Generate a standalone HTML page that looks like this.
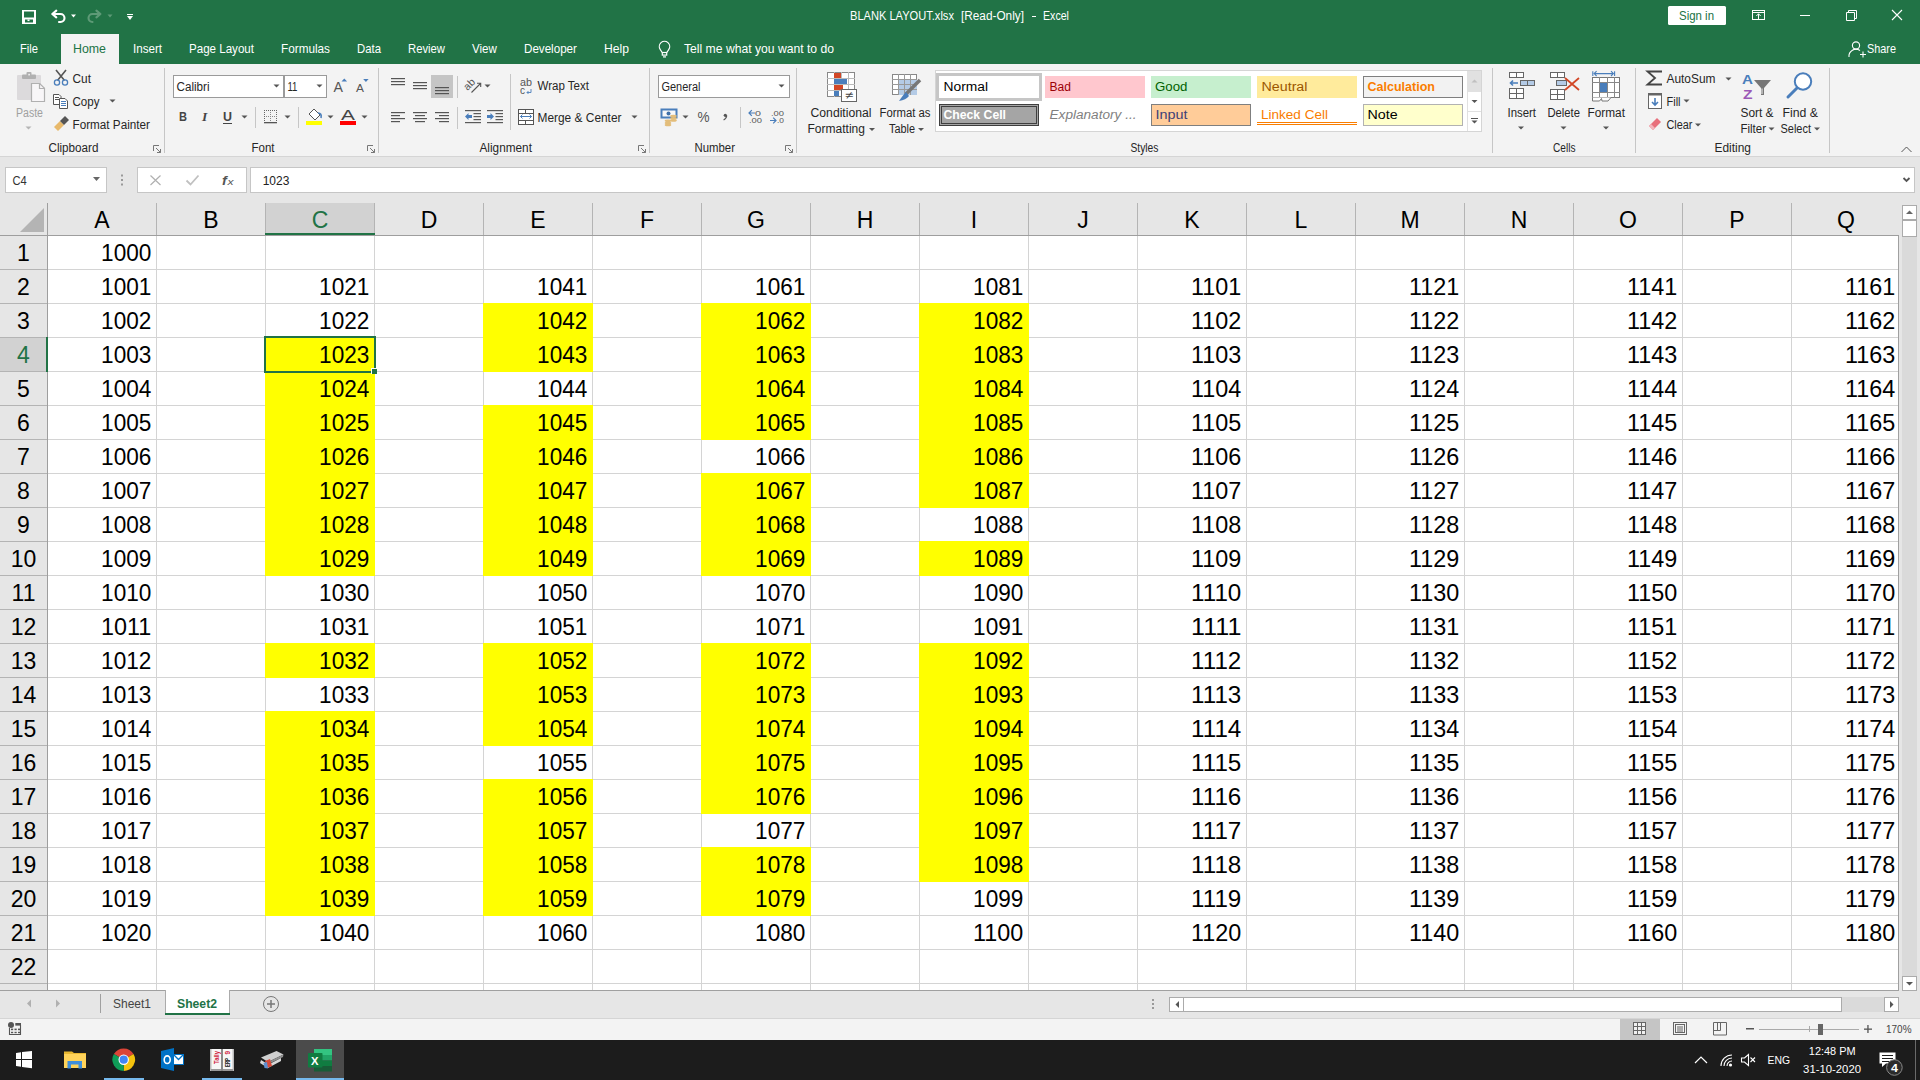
<!DOCTYPE html>
<html><head><meta charset="utf-8"><style>
html,body{margin:0;padding:0;width:1920px;height:1080px;overflow:hidden;background:#fff}
svg{display:block}
text{font-family:"Liberation Sans",sans-serif;white-space:pre}
</style></head><body>
<svg width="1920" height="1080" viewBox="0 0 1920 1080" shape-rendering="auto">
<rect x="0" y="0" width="1920" height="64" fill="#217346"/>
<rect x="0" y="64" width="1920" height="92" fill="#f3f3f3"/>
<rect x="0" y="156" width="1920" height="1" fill="#d5d5d5"/>
<rect x="0" y="157" width="1920" height="46" fill="#e6e6e6"/>
<rect x="0" y="990" width="1920" height="28" fill="#e6e6e6"/>
<rect x="0" y="1018" width="1920" height="22" fill="#f3f3f3"/>
<rect x="0" y="1040" width="1920" height="40" fill="#1c1c1c"/>
<rect x="22" y="10" width="14" height="14" fill="#ffffff"/>
<rect x="24" y="11.5" width="10" height="6" fill="#217346"/>
<rect x="25" y="19.5" width="8" height="3" fill="#217346"/>
<rect x="27.5" y="19.5" width="2" height="1.6" fill="#ffffff"/>
<path d="M52.3 14 L56.3 10.6 M52.3 14 L56.3 17.4 M52.6 14 H60.5 A4 4 0 0 1 60.5 22 H59" fill="none" stroke="#fff" stroke-width="2.1" stroke-linecap="round" stroke-linejoin="round"/>
<path d="M71.0 14.5 L76.0 14.5 L73.5 17.5 Z" fill="#ffffff"/>
<path d="M100.4 14 L96.4 10.6 M100.4 14 L96.4 17.4 M100.1 14 H92.5 A4 4 0 0 0 92.5 22" fill="none" stroke="#5e9a77" stroke-width="2.1" stroke-linecap="round" stroke-linejoin="round"/>
<path d="M107.5 14.5 L112.5 14.5 L110 17.5 Z" fill="#5e9a77"/>
<rect x="127" y="14" width="6" height="1" fill="#ffffff"/>
<path d="M127.0 16.0 L133.0 16.0 L130 20.0 Z" fill="#ffffff"/>
<text x="850.00" y="20" font-size="12.5" fill="#ffffff" font-weight="normal" font-style="normal" textLength="103.97" lengthAdjust="spacingAndGlyphs">BLANK LAYOUT.xlsx</text>
<text x="961.00" y="20" font-size="12.5" fill="#ffffff" font-weight="normal" font-style="normal" textLength="62.99" lengthAdjust="spacingAndGlyphs">[Read-Only]</text>
<rect x="1032" y="16" width="4" height="1" fill="#ffffff"/>
<text x="1043.00" y="20" font-size="12.5" fill="#ffffff" font-weight="normal" font-style="normal" textLength="25.97" lengthAdjust="spacingAndGlyphs">Excel</text>
<rect x="1668" y="6" width="58" height="19" rx="1.5" fill="#fff"/>
<text x="1679.00" y="20" font-size="12.5" fill="#217346" font-weight="normal" font-style="normal" textLength="35.02" lengthAdjust="spacingAndGlyphs">Sign in</text>
<rect x="1752.5" y="10.5" width="12" height="9" fill="none" stroke="#fff" stroke-width="1"/>
<rect x="1752" y="12" width="13" height="1" fill="#ffffff"/>
<path d="M1758.5 19.5 V13.8 M1756.3 16 L1758.5 13.8 L1760.7 16" fill="none" stroke="#fff" stroke-width="1"/>
<rect x="1800" y="15" width="10" height="1" fill="#ffffff"/>
<path d="M1846.5 12.5 H1854.5 V20.5 H1846.5 Z M1848.5 12.5 V10.5 H1856.5 V18.5 H1854.5" fill="none" stroke="#fff" stroke-width="1"/>
<path d="M1892 10 L1902 20 M1902 10 L1892 20" stroke="#fff" stroke-width="1.1"/>
<rect x="61" y="34" width="58" height="30" fill="#f3f3f3"/>
<text x="20.00" y="53" font-size="13" fill="#ffffff" font-weight="normal" font-style="normal" textLength="18.04" lengthAdjust="spacingAndGlyphs">File</text>
<text x="73.00" y="53" font-size="13" fill="#217346" font-weight="normal" font-style="normal" textLength="32.98" lengthAdjust="spacingAndGlyphs">Home</text>
<text x="133.00" y="53" font-size="13" fill="#ffffff" font-weight="normal" font-style="normal" textLength="29.01" lengthAdjust="spacingAndGlyphs">Insert</text>
<text x="189.00" y="53" font-size="13" fill="#ffffff" font-weight="normal" font-style="normal" textLength="65.00" lengthAdjust="spacingAndGlyphs">Page Layout</text>
<text x="281.00" y="53" font-size="13" fill="#ffffff" font-weight="normal" font-style="normal" textLength="48.98" lengthAdjust="spacingAndGlyphs">Formulas</text>
<text x="357.00" y="53" font-size="13" fill="#ffffff" font-weight="normal" font-style="normal" textLength="23.96" lengthAdjust="spacingAndGlyphs">Data</text>
<text x="408.00" y="53" font-size="13" fill="#ffffff" font-weight="normal" font-style="normal" textLength="36.93" lengthAdjust="spacingAndGlyphs">Review</text>
<text x="472.00" y="53" font-size="13" fill="#ffffff" font-weight="normal" font-style="normal" textLength="24.86" lengthAdjust="spacingAndGlyphs">View</text>
<text x="524.00" y="53" font-size="13" fill="#ffffff" font-weight="normal" font-style="normal" textLength="52.96" lengthAdjust="spacingAndGlyphs">Developer</text>
<text x="604.00" y="53" font-size="13" fill="#ffffff" font-weight="normal" font-style="normal" textLength="25.03" lengthAdjust="spacingAndGlyphs">Help</text>
<text x="684.00" y="53" font-size="13" fill="#ffffff" font-weight="normal" font-style="normal" textLength="150.02" lengthAdjust="spacingAndGlyphs">Tell me what you want to do</text>
<path d="M662.2 52.5 L660.3 49.6 A5.2 5.2 0 1 1 668.7 49.6 L666.8 52.5" fill="none" stroke="#fff" stroke-width="1.2"/>
<rect x="662.3" y="52.5" width="4.4" height="2.6" fill="none" stroke="#fff" stroke-width="1.2"/>
<rect x="663" y="56.3" width="3" height="1.2" fill="#ffffff"/>
<circle cx="1856" cy="45.5" r="3.6" fill="none" stroke="#fff" stroke-width="1.1"/>
<path d="M1849 57 A7 7 0 0 1 1860 50.5" fill="none" stroke="#fff" stroke-width="1.1"/>
<path d="M1860 54.5 H1866 M1863 51.5 V57.5" stroke="#fff" stroke-width="1.1"/>
<text x="1867.00" y="53" font-size="13" fill="#ffffff" font-weight="normal" font-style="normal" textLength="28.99" lengthAdjust="spacingAndGlyphs">Share</text>
<rect x="164" y="68" width="1" height="85" fill="#c6c6c6"/>
<rect x="378" y="68" width="1" height="85" fill="#c6c6c6"/>
<rect x="649" y="68" width="1" height="85" fill="#c6c6c6"/>
<rect x="796" y="68" width="1" height="85" fill="#c6c6c6"/>
<rect x="1492" y="68" width="1" height="85" fill="#c6c6c6"/>
<rect x="1635" y="68" width="1" height="85" fill="#c6c6c6"/>
<rect x="1829" y="68" width="1" height="85" fill="#c6c6c6"/>
<path d="M153.5 151 V145.5 H159" fill="none" stroke="#777" stroke-width="1"/>
<path d="M156 148 L160.5 152.5 M160.5 149 V152.5 H157" fill="none" stroke="#777" stroke-width="1"/>
<path d="M367.5 151 V145.5 H373" fill="none" stroke="#777" stroke-width="1"/>
<path d="M370 148 L374.5 152.5 M374.5 149 V152.5 H371" fill="none" stroke="#777" stroke-width="1"/>
<path d="M638.5 151 V145.5 H644" fill="none" stroke="#777" stroke-width="1"/>
<path d="M641 148 L645.5 152.5 M645.5 149 V152.5 H642" fill="none" stroke="#777" stroke-width="1"/>
<path d="M785.5 151 V145.5 H791" fill="none" stroke="#777" stroke-width="1"/>
<path d="M788 148 L792.5 152.5 M792.5 149 V152.5 H789" fill="none" stroke="#777" stroke-width="1"/>
<rect x="17" y="75" width="24" height="25" fill="#dcdadc" rx="1"/>
<rect x="22" y="74.5" width="14" height="4.5" fill="#b0b0b0" rx="1"/>
<rect x="26.5" y="72" width="5" height="3.5" fill="#b0b0b0" rx="1"/>
<rect x="28.3" y="73.8" width="1.6" height="1.6" fill="#f3f3f3"/>
<path d="M31.5 83.5 H39.7 L44.5 88.3 V101.5 H31.5 Z" fill="#f8f6f8" stroke="#b0b0b0" stroke-width="1.2"/>
<path d="M39.5 83.5 V88.5 H44.5" fill="none" stroke="#b0b0b0" stroke-width="1.2"/>
<text x="16.00" y="117" font-size="12" fill="#a0a0a0" font-weight="normal" font-style="normal" textLength="26.99" lengthAdjust="spacingAndGlyphs">Paste</text>
<path d="M25.5 126.5 L31.5 126.5 L28.5 129.5 Z" fill="#b5b5b5"/>
<path d="M56 70 L64.5 80.5 M66 70 L57.5 80.5" stroke="#555" stroke-width="1.6"/>
<circle cx="57" cy="82.5" r="2.6" fill="none" stroke="#4a7ebb" stroke-width="1.3"/>
<circle cx="65" cy="82.5" r="2.6" fill="none" stroke="#4a7ebb" stroke-width="1.3"/>
<text x="72.50" y="83" font-size="12" fill="#262626" font-weight="normal" font-style="normal" textLength="18.47" lengthAdjust="spacingAndGlyphs">Cut</text>
<path d="M53.5 94.5 H59 L61 96.5 V104.5 H53.5 Z" fill="#fff" stroke="#555" stroke-width="1"/>
<path d="M59.5 98.5 H65 L67.5 101 V108.5 H59.5 Z" fill="#fff" stroke="#555" stroke-width="1"/>
<rect x="61" y="101" width="5" height="1" fill="#4a7ebb"/>
<rect x="61" y="103" width="5" height="1" fill="#4a7ebb"/>
<rect x="61" y="105" width="5" height="1" fill="#4a7ebb"/>
<rect x="55" y="97" width="4" height="1" fill="#555"/>
<rect x="55" y="99" width="4" height="1" fill="#555"/>
<text x="72.50" y="106" font-size="12" fill="#262626" font-weight="normal" font-style="normal" textLength="27.01" lengthAdjust="spacingAndGlyphs">Copy</text>
<path d="M109.5 99.5 L115.5 99.5 L112.5 102.5 Z" fill="#555"/>
<path d="M54 127 L60 121 L64 125 L58 131 Z" fill="#e8b96b"/>
<path d="M60 121 L65 116 L69 120 L64 125 Z" fill="#555"/>
<text x="72.50" y="129" font-size="12" fill="#262626" font-weight="normal" font-style="normal" textLength="77.46" lengthAdjust="spacingAndGlyphs">Format Painter</text>
<text x="48.50" y="152" font-size="12" fill="#262626" font-weight="normal" font-style="normal" textLength="49.96" lengthAdjust="spacingAndGlyphs">Clipboard</text>
<rect x="173.5" y="75.5" width="110" height="22" fill="#fff" stroke="#9a9a9a" stroke-width="1"/>
<rect x="283.5" y="75.5" width="43" height="22" fill="#fff" stroke="#9a9a9a" stroke-width="1"/>
<rect x="283" y="75" width="2" height="23" fill="#9a9a9a"/>
<text x="176.50" y="91" font-size="12" fill="#262626" font-weight="normal" font-style="normal" textLength="33.01" lengthAdjust="spacingAndGlyphs">Calibri</text>
<text x="287.50" y="91" font-size="12" fill="#262626" font-weight="normal" font-style="normal" textLength="9.97" lengthAdjust="spacingAndGlyphs">11</text>
<path d="M273.5 84.5 L279.5 84.5 L276.5 87.5 Z" fill="#555"/>
<path d="M316.5 84.5 L322.5 84.5 L319.5 87.5 Z" fill="#555"/>
<text x="333.50" y="92" font-size="14" fill="#555" font-weight="normal" font-style="normal" textLength="9.44" lengthAdjust="spacingAndGlyphs">A</text>
<path d="M341.5 81.5 L344.3 78.5 L347.1 81.5 Z" fill="#4a7ebb"/>
<text x="356.00" y="92" font-size="11" fill="#555" font-weight="normal" font-style="normal" textLength="7.93" lengthAdjust="spacingAndGlyphs">A</text>
<path d="M363.2 79 L368.6 79 L365.9 82 Z" fill="#4a7ebb"/>
<text x="179.00" y="121" font-size="13" fill="#444" font-weight="bold" font-style="normal" textLength="7.99" lengthAdjust="spacingAndGlyphs">B</text>
<text x="202" y="121" font-size="13.5" fill="#444" font-family="Liberation Serif" font-weight="bold" font-style="italic" style="font-family:Liberation Serif">I</text>
<text x="223.00" y="121" font-size="13" fill="#444" font-weight="bold" font-style="normal" textLength="8.99" lengthAdjust="spacingAndGlyphs">U</text>
<rect x="223" y="123" width="9" height="1" fill="#444"/>
<path d="M241.5 115.5 L247.5 115.5 L244.5 118.5 Z" fill="#555"/>
<rect x="255" y="107" width="1" height="21" fill="#c6c6c6"/>
<rect x="264" y="110" width="1" height="1" fill="#666"/>
<rect x="264" y="110" width="1" height="1" fill="#666"/>
<rect x="276" y="110" width="1" height="1" fill="#666"/>
<rect x="270" y="110" width="1" height="1" fill="#888"/>
<rect x="264" y="116" width="1" height="1" fill="#888"/>
<rect x="266" y="110" width="1" height="1" fill="#666"/>
<rect x="264" y="112" width="1" height="1" fill="#666"/>
<rect x="276" y="112" width="1" height="1" fill="#666"/>
<rect x="270" y="112" width="1" height="1" fill="#888"/>
<rect x="266" y="116" width="1" height="1" fill="#888"/>
<rect x="268" y="110" width="1" height="1" fill="#666"/>
<rect x="264" y="114" width="1" height="1" fill="#666"/>
<rect x="276" y="114" width="1" height="1" fill="#666"/>
<rect x="270" y="114" width="1" height="1" fill="#888"/>
<rect x="268" y="116" width="1" height="1" fill="#888"/>
<rect x="270" y="110" width="1" height="1" fill="#666"/>
<rect x="264" y="116" width="1" height="1" fill="#666"/>
<rect x="276" y="116" width="1" height="1" fill="#666"/>
<rect x="270" y="116" width="1" height="1" fill="#888"/>
<rect x="270" y="116" width="1" height="1" fill="#888"/>
<rect x="272" y="110" width="1" height="1" fill="#666"/>
<rect x="264" y="118" width="1" height="1" fill="#666"/>
<rect x="276" y="118" width="1" height="1" fill="#666"/>
<rect x="270" y="118" width="1" height="1" fill="#888"/>
<rect x="272" y="116" width="1" height="1" fill="#888"/>
<rect x="274" y="110" width="1" height="1" fill="#666"/>
<rect x="264" y="120" width="1" height="1" fill="#666"/>
<rect x="276" y="120" width="1" height="1" fill="#666"/>
<rect x="270" y="120" width="1" height="1" fill="#888"/>
<rect x="274" y="116" width="1" height="1" fill="#888"/>
<rect x="276" y="110" width="1" height="1" fill="#666"/>
<rect x="264" y="122" width="1" height="1" fill="#666"/>
<rect x="276" y="122" width="1" height="1" fill="#666"/>
<rect x="270" y="122" width="1" height="1" fill="#888"/>
<rect x="276" y="116" width="1" height="1" fill="#888"/>
<rect x="264" y="122" width="13" height="1.3" fill="#555"/>
<path d="M284.5 115.5 L290.5 115.5 L287.5 118.5 Z" fill="#555"/>
<rect x="298" y="107" width="1" height="21" fill="#c6c6c6"/>
<path d="M309 114 L314 109 L320 115 L315 120 Z" fill="#fff" stroke="#555" stroke-width="1"/>
<path d="M318 113 Q322 113 321 118" fill="none" stroke="#4a7ebb" stroke-width="1.6"/>
<rect x="306" y="121" width="16" height="4" fill="#ffff00"/>
<path d="M327.5 115.5 L333.5 115.5 L330.5 118.5 Z" fill="#555"/>
<text x="341.00" y="120" font-size="14" fill="#444" font-weight="normal" font-style="normal" textLength="13.91" lengthAdjust="spacingAndGlyphs">A</text>
<rect x="340" y="121" width="16" height="4" fill="#ff0000"/>
<path d="M361.5 115.5 L367.5 115.5 L364.5 118.5 Z" fill="#555"/>
<text x="251.50" y="152" font-size="12" fill="#262626" font-weight="normal" font-style="normal" textLength="23.01" lengthAdjust="spacingAndGlyphs">Font</text>
<rect x="391" y="78" width="14" height="1.2" fill="#555"/>
<rect x="391" y="81" width="14" height="1.2" fill="#555"/>
<rect x="391" y="84" width="14" height="1.2" fill="#555"/>
<rect x="413" y="82" width="14" height="1.2" fill="#555"/>
<rect x="413" y="85" width="14" height="1.2" fill="#555"/>
<rect x="413" y="88" width="14" height="1.2" fill="#555"/>
<rect x="431" y="75" width="22" height="23" fill="#c5c5c5"/>
<rect x="435" y="87" width="14" height="1.2" fill="#555"/>
<rect x="435" y="90" width="14" height="1.2" fill="#555"/>
<rect x="435" y="93" width="14" height="1.2" fill="#555"/>
<rect x="457" y="76" width="1" height="22" fill="#c6c6c6"/>
<text x="0" y="0" font-size="10.5" fill="#555" transform="translate(467.5 91) rotate(-45)">ab</text>
<path d="M471.5 92.5 L480.5 83.5 M477 83.3 H480.7 V87" fill="none" stroke="#555" stroke-width="1.1"/>
<path d="M484.5 84.5 L490.5 84.5 L487.5 87.5 Z" fill="#555"/>
<rect x="510" y="74" width="1" height="56" fill="#c6c6c6"/>
<text x="520.00" y="86" font-size="10" fill="#555" font-weight="normal" font-style="normal" textLength="12.02" lengthAdjust="spacingAndGlyphs">ab</text>
<text x="520.00" y="94" font-size="10" fill="#555" font-weight="normal" font-style="normal" textLength="5.00" lengthAdjust="spacingAndGlyphs">c</text>
<path d="M531 89 V92.5 H527 M528.5 91 L527 92.5 L528.5 94" fill="none" stroke="#4a7ebb" stroke-width="0.9"/>
<text x="537.50" y="90" font-size="12" fill="#262626" font-weight="normal" font-style="normal" textLength="51.48" lengthAdjust="spacingAndGlyphs">Wrap Text</text>
<rect x="391" y="112" width="14" height="1.2" fill="#555"/>
<rect x="391" y="115" width="9" height="1.2" fill="#555"/>
<rect x="391" y="118" width="14" height="1.2" fill="#555"/>
<rect x="391" y="121" width="9" height="1.2" fill="#555"/>
<rect x="413.0" y="112" width="14" height="1.2" fill="#555"/>
<rect x="415.0" y="115" width="10" height="1.2" fill="#555"/>
<rect x="413.0" y="118" width="14" height="1.2" fill="#555"/>
<rect x="415.0" y="121" width="10" height="1.2" fill="#555"/>
<rect x="435" y="112" width="14" height="1.2" fill="#555"/>
<rect x="439" y="115" width="10" height="1.2" fill="#555"/>
<rect x="435" y="118" width="14" height="1.2" fill="#555"/>
<rect x="439" y="121" width="10" height="1.2" fill="#555"/>
<rect x="457" y="107" width="1" height="22" fill="#c6c6c6"/>
<rect x="465" y="110" width="16" height="1.2" fill="#5a5a5a"/>
<rect x="465" y="122" width="16" height="1.2" fill="#5a5a5a"/>
<rect x="473.5" y="113" width="7.5" height="1.2" fill="#5a5a5a"/>
<rect x="473.5" y="116" width="7.5" height="1.2" fill="#5a5a5a"/>
<rect x="473.5" y="119" width="7.5" height="1.2" fill="#5a5a5a"/>
<rect x="487" y="110" width="16" height="1.2" fill="#5a5a5a"/>
<rect x="487" y="122" width="16" height="1.2" fill="#5a5a5a"/>
<rect x="495.5" y="113" width="7.5" height="1.2" fill="#5a5a5a"/>
<rect x="495.5" y="116" width="7.5" height="1.2" fill="#5a5a5a"/>
<rect x="495.5" y="119" width="7.5" height="1.2" fill="#5a5a5a"/>
<path d="M465 116.5 L468.5 113 V115 H472 V118 H468.5 V120 Z" fill="#4a7ebb"/>
<path d="M494 116.5 L490.5 113 V115 H487 V118 H490.5 V120 Z" fill="#4a7ebb"/>
<rect x="518.5" y="109.5" width="15" height="15" fill="#fff" stroke="#555" stroke-width="1"/>
<rect x="518" y="113" width="16" height="1" fill="#555"/>
<rect x="518" y="120" width="16" height="1" fill="#555"/>
<rect x="525" y="109" width="1" height="4" fill="#555"/>
<rect x="525" y="121" width="1" height="4" fill="#555"/>
<path d="M520.5 116.5 H531.5 M522.5 114.5 L520.5 116.5 L522.5 118.5 M529.5 114.5 L531.5 116.5 L529.5 118.5" fill="none" stroke="#4a7ebb" stroke-width="1"/>
<text x="537.50" y="122" font-size="12" fill="#262626" font-weight="normal" font-style="normal" textLength="84.00" lengthAdjust="spacingAndGlyphs">Merge &amp; Center</text>
<path d="M631.5 115.5 L637.5 115.5 L634.5 118.5 Z" fill="#555"/>
<text x="479.50" y="152" font-size="12" fill="#262626" font-weight="normal" font-style="normal" textLength="52.46" lengthAdjust="spacingAndGlyphs">Alignment</text>
<rect x="658.5" y="75.5" width="131" height="22" fill="#fff" stroke="#9a9a9a" stroke-width="1"/>
<text x="661.50" y="91" font-size="12" fill="#262626" font-weight="normal" font-style="normal" textLength="38.99" lengthAdjust="spacingAndGlyphs">General</text>
<path d="M778.5 84.5 L784.5 84.5 L781.5 87.5 Z" fill="#555"/>
<rect x="661.5" y="109.5" width="15" height="8" fill="#f8f8f8" stroke="#4a7ebb" stroke-width="2"/>
<circle cx="668.5" cy="113.5" r="2" fill="#3f6fa8"/>
<ellipse cx="673.5" cy="116" rx="3.3" ry="1.3" fill="#e3bd7a"/>
<ellipse cx="673.5" cy="118.2" rx="3.3" ry="1.3" fill="#e3bd7a"/>
<ellipse cx="673.5" cy="120.4" rx="3.3" ry="1.3" fill="#e3bd7a"/>
<ellipse cx="668" cy="120.8" rx="3.3" ry="1.3" fill="#e3bd7a"/>
<ellipse cx="668" cy="123" rx="3.3" ry="1.3" fill="#e3bd7a"/>
<ellipse cx="668" cy="125" rx="3.3" ry="1.3" fill="#e3bd7a"/>
<path d="M682.5 115.5 L688.5 115.5 L685.5 118.5 Z" fill="#555"/>
<text x="697.50" y="122" font-size="14" fill="#555" font-weight="normal" font-style="normal" textLength="12.05" lengthAdjust="spacingAndGlyphs">%</text>
<circle cx="725.3" cy="115.3" r="1.6" fill="#555"/>
<path d="M726.7 115.6 Q726.6 118.5 723.6 120" fill="none" stroke="#555" stroke-width="1.2"/>
<rect x="740" y="107" width="1" height="21" fill="#c6c6c6"/>
<text x="755.00" y="116" font-size="8" fill="#555" font-weight="normal" font-style="normal" textLength="5.93" lengthAdjust="spacingAndGlyphs">0</text>
<text x="749.00" y="123" font-size="8" fill="#555" font-weight="normal" font-style="normal" textLength="13.03" lengthAdjust="spacingAndGlyphs">.00</text>
<path d="M755 113 H749 M751.8 110.2 L749 113 L751.8 115.8" fill="none" stroke="#4a7ebb" stroke-width="1.2"/>
<text x="771.00" y="116" font-size="8" fill="#555" font-weight="normal" font-style="normal" textLength="13.03" lengthAdjust="spacingAndGlyphs">.00</text>
<text x="777.00" y="123" font-size="8" fill="#555" font-weight="normal" font-style="normal" textLength="6.97" lengthAdjust="spacingAndGlyphs">.0</text>
<path d="M770 120.5 H776 M773.2 117.7 L776 120.5 L773.2 123.3" fill="none" stroke="#4a7ebb" stroke-width="1.2"/>
<text x="694.50" y="152" font-size="12" fill="#262626" font-weight="normal" font-style="normal" textLength="40.48" lengthAdjust="spacingAndGlyphs">Number</text>
<rect x="827.5" y="72.5" width="27" height="24" fill="#fff" stroke="#888" stroke-width="1"/>
<rect x="834" y="72" width="1" height="25" fill="#bbb"/>
<rect x="841" y="72" width="1" height="25" fill="#bbb"/>
<rect x="848" y="72" width="1" height="25" fill="#bbb"/>
<rect x="827" y="78" width="28" height="1" fill="#bbb"/>
<rect x="827" y="84" width="28" height="1" fill="#bbb"/>
<rect x="827" y="90" width="28" height="1" fill="#bbb"/>
<rect x="834" y="73" width="7" height="5" fill="#d24726"/>
<rect x="834" y="79" width="13" height="5" fill="#4a7ebb"/>
<rect x="834" y="85" width="9" height="5" fill="#d24726"/>
<rect x="834" y="91" width="5" height="5" fill="#4a7ebb"/>
<rect x="841.5" y="89.5" width="15" height="12" fill="#fff" stroke="#666" stroke-width="1"/>
<text x="845.00" y="99" font-size="11" fill="#444" font-weight="normal" font-style="normal" textLength="8.05" lengthAdjust="spacingAndGlyphs">≠</text>
<text x="810.50" y="117" font-size="12" fill="#262626" font-weight="normal" font-style="normal" textLength="61.04" lengthAdjust="spacingAndGlyphs">Conditional</text>
<text x="807.50" y="133" font-size="12" fill="#262626" font-weight="normal" font-style="normal" textLength="57.45" lengthAdjust="spacingAndGlyphs">Formatting</text>
<path d="M869.0 128.0 L875.0 128.0 L872 131.0 Z" fill="#555"/>
<rect x="892.5" y="74.5" width="24" height="20" fill="#fff" stroke="#888" stroke-width="1"/>
<rect x="898" y="80" width="19" height="15" fill="#b4cbe6"/>
<rect x="898" y="74" width="1" height="21" fill="#999"/>
<rect x="904" y="74" width="1" height="21" fill="#999"/>
<rect x="910" y="74" width="1" height="21" fill="#999"/>
<rect x="892" y="79" width="25" height="1" fill="#999"/>
<rect x="892" y="84" width="25" height="1" fill="#999"/>
<rect x="892" y="89" width="25" height="1" fill="#999"/>
<path d="M920 80 L906 94" stroke="#777" stroke-width="3.5"/>
<path d="M906 92 Q903 95 899 101 Q906 100 909 96 Z" fill="#4a7ebb"/>
<text x="879.50" y="117" font-size="12" fill="#262626" font-weight="normal" font-style="normal" textLength="51.01" lengthAdjust="spacingAndGlyphs">Format as</text>
<text x="889.00" y="133" font-size="12" fill="#262626" font-weight="normal" font-style="normal" textLength="25.99" lengthAdjust="spacingAndGlyphs">Table</text>
<path d="M918.0 128.0 L924.0 128.0 L921 131.0 Z" fill="#555"/>
<rect x="935.5" y="70.5" width="546" height="61" fill="#fff" stroke="#d5d5d5" stroke-width="1"/>
<rect x="1467" y="71" width="1" height="60" fill="#e1e1e1"/>
<rect x="1468" y="71" width="13" height="20" fill="#e1e1e1"/>
<path d="M1471.5 82.5 L1474.5 79.5 L1477.5 82.5 Z" fill="#c0c0c0"/>
<rect x="1468" y="91" width="13" height="1" fill="#e1e1e1"/>
<rect x="1468" y="111" width="13" height="1" fill="#e1e1e1"/>
<path d="M1471.5 100.0 L1477.5 100.0 L1474.5 103.0 Z" fill="#555"/>
<rect x="1471" y="118" width="7" height="1" fill="#555"/>
<path d="M1471.5 120.5 L1477.5 120.5 L1474.5 123.5 Z" fill="#555"/>
<rect x="937.5" y="74.5" width="103" height="25" fill="#fff" stroke="#c6c6c6" stroke-width="3"/>
<text x="943.50" y="90.5" font-size="12" fill="#000" font-weight="normal" font-style="normal" textLength="44.47" lengthAdjust="spacingAndGlyphs">Normal</text>
<rect x="939" y="104" width="100" height="22" fill="#3f3f3f"/>
<rect x="940" y="105" width="98" height="20" fill="#a5a5a5"/>
<rect x="941.5" y="106.5" width="95" height="17" fill="none" stroke="#3f3f3f" stroke-width="1"/>
<text x="943.50" y="118.5" font-size="12" fill="#fff" font-weight="bold" font-style="normal" textLength="62.46" lengthAdjust="spacingAndGlyphs">Check Cell</text>
<rect x="1045" y="76" width="100" height="22" fill="#ffc7ce"/>
<text x="1049.50" y="90.5" font-size="12" fill="#9c0006" font-weight="normal" font-style="normal" textLength="21.45" lengthAdjust="spacingAndGlyphs">Bad</text>
<rect x="1151" y="76" width="100" height="22" fill="#c6efce"/>
<text x="1155.00" y="90.5" font-size="12" fill="#006100" font-weight="normal" font-style="normal" textLength="32.45" lengthAdjust="spacingAndGlyphs">Good</text>
<rect x="1257" y="76" width="100" height="22" fill="#ffeb9c"/>
<text x="1261.50" y="90.5" font-size="12" fill="#9c5700" font-weight="normal" font-style="normal" textLength="45.98" lengthAdjust="spacingAndGlyphs">Neutral</text>
<rect x="1363.5" y="76.5" width="99" height="21" fill="#f2f2f2" stroke="#7f7f7f" stroke-width="1"/>
<text x="1367.50" y="90.5" font-size="12" fill="#fa7d00" font-weight="bold" font-style="normal" textLength="67.47" lengthAdjust="spacingAndGlyphs">Calculation</text>
<text x="1049.50" y="118.5" font-size="12" fill="#7f7f7f" font-weight="normal" font-style="italic" textLength="87.01" lengthAdjust="spacingAndGlyphs">Explanatory ...</text>
<rect x="1151.5" y="104.5" width="99" height="21" fill="#ffcc99" stroke="#7f7f7f" stroke-width="1"/>
<text x="1155.50" y="118.5" font-size="12" fill="#3f3f76" font-weight="normal" font-style="normal" textLength="31.99" lengthAdjust="spacingAndGlyphs">Input</text>
<text x="1261.00" y="118.5" font-size="12" fill="#fa7d00" font-weight="normal" font-style="normal" textLength="66.96" lengthAdjust="spacingAndGlyphs">Linked Cell</text>
<rect x="1257" y="122" width="100" height="1" fill="#fa7d00"/>
<rect x="1257" y="124" width="100" height="1" fill="#fa7d00"/>
<rect x="1363.5" y="104.5" width="99" height="21" fill="#ffffcc" stroke="#b2b2b2" stroke-width="1"/>
<text x="1367.50" y="118.5" font-size="12" fill="#000" font-weight="normal" font-style="normal" textLength="30.06" lengthAdjust="spacingAndGlyphs">Note</text>
<text x="1130.50" y="152" font-size="12" fill="#262626" font-weight="normal" font-style="normal" textLength="27.98" lengthAdjust="spacingAndGlyphs">Styles</text>
<rect x="1509.5" y="72.5" width="14" height="5" fill="#fff" stroke="#666" stroke-width="1"/>
<rect x="1516" y="72" width="1" height="5" fill="#666"/>
<rect x="1509.5" y="88.5" width="14" height="10" fill="#fff" stroke="#666" stroke-width="1"/>
<rect x="1516" y="88" width="1" height="10" fill="#666"/>
<rect x="1509" y="93" width="15" height="1" fill="#666"/>
<rect x="1520.5" y="80.5" width="14" height="5" fill="#b4cbe6" stroke="#666" stroke-width="1"/>
<rect x="1527" y="80" width="1" height="6" fill="#666"/>
<path d="M1518 83 H1510.5 M1513 80.5 L1510.5 83 L1513 85.5" fill="none" stroke="#4a7ebb" stroke-width="1.6"/>
<text x="1507.50" y="117" font-size="12" fill="#262626" font-weight="normal" font-style="normal" textLength="28.51" lengthAdjust="spacingAndGlyphs">Insert</text>
<path d="M1518.0 126.5 L1524.0 126.5 L1521 129.5 Z" fill="#555"/>
<rect x="1550.5" y="72.5" width="14" height="5" fill="#fff" stroke="#666" stroke-width="1"/>
<rect x="1557" y="72" width="1" height="5" fill="#666"/>
<rect x="1550.5" y="89.5" width="14" height="10" fill="#fff" stroke="#666" stroke-width="1"/>
<rect x="1557" y="89" width="1" height="10" fill="#666"/>
<rect x="1550" y="94" width="15" height="1" fill="#666"/>
<rect x="1556.5" y="80.5" width="10" height="5" fill="#b4cbe6" stroke="#666" stroke-width="1"/>
<path d="M1565 78 L1579 90 M1579 78 L1565 90" stroke="#d24726" stroke-width="1.8"/>
<text x="1547.50" y="117" font-size="12" fill="#262626" font-weight="normal" font-style="normal" textLength="32.49" lengthAdjust="spacingAndGlyphs">Delete</text>
<path d="M1560.5 126.5 L1566.5 126.5 L1563.5 129.5 Z" fill="#555"/>
<path d="M1592.8 71.2 V76 M1614.6 71.2 V76 M1594 73.6 H1613.4 M1596.6 71.2 L1594.2 73.6 L1596.6 76 M1611 71.2 L1613.4 73.6 L1611 76" fill="none" stroke="#4a7ebb" stroke-width="1.1"/>
<rect x="1592.5" y="77.5" width="27" height="20" fill="#fff" stroke="#777" stroke-width="1"/>
<rect x="1599.0" y="77" width="1" height="21" fill="#888"/>
<rect x="1607.0" y="77" width="1" height="21" fill="#888"/>
<rect x="1614.0" y="77" width="1" height="21" fill="#888"/>
<rect x="1592" y="82" width="28" height="1" fill="#888"/>
<rect x="1592" y="92" width="28" height="1" fill="#888"/>
<rect x="1600" y="83" width="7" height="9" fill="#4a7ebb"/>
<path d="M1592.5 97.5 V101 H1599.5 L1601.5 98.5 L1602 101 H1608 L1611 97.5" fill="#fff" stroke="#777" stroke-width="1"/>
<text x="1587.50" y="117" font-size="12" fill="#262626" font-weight="normal" font-style="normal" textLength="37.50" lengthAdjust="spacingAndGlyphs">Format</text>
<path d="M1603.0 126.5 L1609.0 126.5 L1606 129.5 Z" fill="#555"/>
<text x="1553.00" y="152" font-size="12" fill="#262626" font-weight="normal" font-style="normal" textLength="22.47" lengthAdjust="spacingAndGlyphs">Cells</text>
<path d="M1662 71.5 H1647.5 L1655 78 L1647.5 84.5 H1662" fill="none" stroke="#444" stroke-width="1.8"/>
<text x="1666.50" y="83" font-size="12" fill="#262626" font-weight="normal" font-style="normal" textLength="48.96" lengthAdjust="spacingAndGlyphs">AutoSum</text>
<path d="M1725.5 77.5 L1731.5 77.5 L1728.5 80.5 Z" fill="#555"/>
<rect x="1648.5" y="93.5" width="13" height="15" fill="#fff" stroke="#666" stroke-width="1"/>
<rect x="1648" y="93" width="14" height="2.5" fill="#666"/>
<path d="M1655 98 V105 M1652 102 L1655 105 L1658 102" fill="none" stroke="#4a7ebb" stroke-width="1.6"/>
<text x="1666.50" y="105.5" font-size="12" fill="#262626" font-weight="normal" font-style="normal" textLength="14.02" lengthAdjust="spacingAndGlyphs">Fill</text>
<path d="M1683.5 99.5 L1689.5 99.5 L1686.5 102.5 Z" fill="#555"/>
<path d="M1649 126 L1657 118 L1661 122 L1653 130 Z" fill="#e8707c"/>
<path d="M1649 126 L1651 124 L1655 128 L1653 130 Z" fill="#f4b6bd"/>
<text x="1666.50" y="129" font-size="12" fill="#262626" font-weight="normal" font-style="normal" textLength="25.98" lengthAdjust="spacingAndGlyphs">Clear</text>
<path d="M1695.0 123.5 L1701.0 123.5 L1698 126.5 Z" fill="#555"/>
<text x="1742.00" y="84" font-size="12" fill="#4a7ebb" font-weight="bold" font-style="normal" textLength="10.96" lengthAdjust="spacingAndGlyphs">A</text>
<text x="1743.00" y="99" font-size="12" fill="#9b59b6" font-weight="bold" font-style="normal" textLength="9.54" lengthAdjust="spacingAndGlyphs">Z</text>
<path d="M1754 80 H1771 L1764 88 V95 H1761 V88 Z" fill="#777"/>
<path d="M1762 88.5 V94" stroke="#f3f3f3" stroke-width="1"/>
<text x="1740.50" y="117" font-size="12" fill="#262626" font-weight="normal" font-style="normal" textLength="33.05" lengthAdjust="spacingAndGlyphs">Sort &amp;</text>
<text x="1740.50" y="133" font-size="12" fill="#262626" font-weight="normal" font-style="normal" textLength="25.47" lengthAdjust="spacingAndGlyphs">Filter</text>
<path d="M1768.5 127.5 L1774.5 127.5 L1771.5 130.5 Z" fill="#555"/>
<circle cx="1803" cy="81.5" r="8.2" fill="#fff" stroke="#4a7ebb" stroke-width="2"/>
<path d="M1797 88 L1788 97" stroke="#4a7ebb" stroke-width="3" stroke-linecap="round"/>
<text x="1782.50" y="117" font-size="12" fill="#262626" font-weight="normal" font-style="normal" textLength="35.48" lengthAdjust="spacingAndGlyphs">Find &amp;</text>
<text x="1780.50" y="133" font-size="12" fill="#262626" font-weight="normal" font-style="normal" textLength="30.46" lengthAdjust="spacingAndGlyphs">Select</text>
<path d="M1814.0 127.5 L1820.0 127.5 L1817 130.5 Z" fill="#555"/>
<text x="1714.50" y="152" font-size="12" fill="#262626" font-weight="normal" font-style="normal" textLength="36.49" lengthAdjust="spacingAndGlyphs">Editing</text>
<path d="M1901.5 152 L1906.5 147 L1911.5 152" fill="none" stroke="#555" stroke-width="1"/>
<rect x="5.5" y="167.5" width="101" height="25" fill="#fff" stroke="#c6c6c6" stroke-width="1"/>
<text x="12.50" y="185" font-size="12.5" fill="#333" font-weight="normal" font-style="normal" textLength="14.28" lengthAdjust="spacingAndGlyphs">C4</text>
<path d="M93.0 177.0 L100.0 177.0 L96.5 181.0 Z" fill="#666"/>
<rect x="121" y="174.5" width="2" height="2" fill="#999"/>
<rect x="121" y="179" width="2" height="2" fill="#999"/>
<rect x="121" y="183.5" width="2" height="2" fill="#999"/>
<rect x="137.5" y="167.5" width="109" height="25" fill="#fff" stroke="#c6c6c6" stroke-width="1"/>
<path d="M150.5 175.5 L160.5 185 M160.5 175.5 L150.5 185" stroke="#b0b0b0" stroke-width="1.2"/>
<path d="M186.5 180.5 L190.5 184.5 L198.5 175.5" fill="none" stroke="#c0c0c0" stroke-width="1.8"/>
<text x="222.00" y="185" font-size="12" fill="#555" font-weight="bold" font-style="italic" textLength="4.80" lengthAdjust="spacingAndGlyphs">f</text>
<text x="227.54" y="185" font-size="9" fill="#555" font-weight="normal" font-style="italic" textLength="6.06" lengthAdjust="spacingAndGlyphs">x</text>
<rect x="250.5" y="167.5" width="1664" height="25" fill="#fff" stroke="#c6c6c6" stroke-width="1"/>
<text x="262.70" y="185" font-size="12.5" fill="#222" font-weight="normal" font-style="normal" textLength="26.61" lengthAdjust="spacingAndGlyphs">1023</text>
<path d="M1903.5 178 L1906.5 181 L1909.5 178" fill="none" stroke="#555" stroke-width="1.8"/>
<rect x="0" y="203" width="1899" height="32" fill="#e6e6e6"/>
<rect x="0" y="235" width="47" height="755" fill="#e6e6e6"/>
<rect x="48" y="236" width="1850" height="754" fill="#fff"/>
<rect x="1899" y="203" width="21" height="788" fill="#e6e6e6"/>
<rect x="266" y="203" width="108" height="32" fill="#d2d2d2"/>
<rect x="0" y="338" width="47" height="33" fill="#d2d2d2"/>
<rect x="156" y="236" width="1" height="754" fill="#d4d4d4"/>
<rect x="156" y="203" width="1" height="32" fill="#b4b4b4"/>
<rect x="265" y="236" width="1" height="754" fill="#d4d4d4"/>
<rect x="265" y="203" width="1" height="32" fill="#b4b4b4"/>
<rect x="374" y="236" width="1" height="754" fill="#d4d4d4"/>
<rect x="374" y="203" width="1" height="32" fill="#b4b4b4"/>
<rect x="483" y="236" width="1" height="754" fill="#d4d4d4"/>
<rect x="483" y="203" width="1" height="32" fill="#b4b4b4"/>
<rect x="592" y="236" width="1" height="754" fill="#d4d4d4"/>
<rect x="592" y="203" width="1" height="32" fill="#b4b4b4"/>
<rect x="701" y="236" width="1" height="754" fill="#d4d4d4"/>
<rect x="701" y="203" width="1" height="32" fill="#b4b4b4"/>
<rect x="810" y="236" width="1" height="754" fill="#d4d4d4"/>
<rect x="810" y="203" width="1" height="32" fill="#b4b4b4"/>
<rect x="919" y="236" width="1" height="754" fill="#d4d4d4"/>
<rect x="919" y="203" width="1" height="32" fill="#b4b4b4"/>
<rect x="1028" y="236" width="1" height="754" fill="#d4d4d4"/>
<rect x="1028" y="203" width="1" height="32" fill="#b4b4b4"/>
<rect x="1137" y="236" width="1" height="754" fill="#d4d4d4"/>
<rect x="1137" y="203" width="1" height="32" fill="#b4b4b4"/>
<rect x="1246" y="236" width="1" height="754" fill="#d4d4d4"/>
<rect x="1246" y="203" width="1" height="32" fill="#b4b4b4"/>
<rect x="1355" y="236" width="1" height="754" fill="#d4d4d4"/>
<rect x="1355" y="203" width="1" height="32" fill="#b4b4b4"/>
<rect x="1464" y="236" width="1" height="754" fill="#d4d4d4"/>
<rect x="1464" y="203" width="1" height="32" fill="#b4b4b4"/>
<rect x="1573" y="236" width="1" height="754" fill="#d4d4d4"/>
<rect x="1573" y="203" width="1" height="32" fill="#b4b4b4"/>
<rect x="1682" y="236" width="1" height="754" fill="#d4d4d4"/>
<rect x="1682" y="203" width="1" height="32" fill="#b4b4b4"/>
<rect x="1791" y="236" width="1" height="754" fill="#d4d4d4"/>
<rect x="1791" y="203" width="1" height="32" fill="#b4b4b4"/>
<rect x="48" y="269" width="1850" height="1" fill="#d4d4d4"/>
<rect x="0" y="269" width="47" height="1" fill="#b4b4b4"/>
<rect x="48" y="303" width="1850" height="1" fill="#d4d4d4"/>
<rect x="0" y="303" width="47" height="1" fill="#b4b4b4"/>
<rect x="48" y="337" width="1850" height="1" fill="#d4d4d4"/>
<rect x="0" y="337" width="47" height="1" fill="#b4b4b4"/>
<rect x="48" y="371" width="1850" height="1" fill="#d4d4d4"/>
<rect x="0" y="371" width="47" height="1" fill="#b4b4b4"/>
<rect x="48" y="405" width="1850" height="1" fill="#d4d4d4"/>
<rect x="0" y="405" width="47" height="1" fill="#b4b4b4"/>
<rect x="48" y="439" width="1850" height="1" fill="#d4d4d4"/>
<rect x="0" y="439" width="47" height="1" fill="#b4b4b4"/>
<rect x="48" y="473" width="1850" height="1" fill="#d4d4d4"/>
<rect x="0" y="473" width="47" height="1" fill="#b4b4b4"/>
<rect x="48" y="507" width="1850" height="1" fill="#d4d4d4"/>
<rect x="0" y="507" width="47" height="1" fill="#b4b4b4"/>
<rect x="48" y="541" width="1850" height="1" fill="#d4d4d4"/>
<rect x="0" y="541" width="47" height="1" fill="#b4b4b4"/>
<rect x="48" y="575" width="1850" height="1" fill="#d4d4d4"/>
<rect x="0" y="575" width="47" height="1" fill="#b4b4b4"/>
<rect x="48" y="609" width="1850" height="1" fill="#d4d4d4"/>
<rect x="0" y="609" width="47" height="1" fill="#b4b4b4"/>
<rect x="48" y="643" width="1850" height="1" fill="#d4d4d4"/>
<rect x="0" y="643" width="47" height="1" fill="#b4b4b4"/>
<rect x="48" y="677" width="1850" height="1" fill="#d4d4d4"/>
<rect x="0" y="677" width="47" height="1" fill="#b4b4b4"/>
<rect x="48" y="711" width="1850" height="1" fill="#d4d4d4"/>
<rect x="0" y="711" width="47" height="1" fill="#b4b4b4"/>
<rect x="48" y="745" width="1850" height="1" fill="#d4d4d4"/>
<rect x="0" y="745" width="47" height="1" fill="#b4b4b4"/>
<rect x="48" y="779" width="1850" height="1" fill="#d4d4d4"/>
<rect x="0" y="779" width="47" height="1" fill="#b4b4b4"/>
<rect x="48" y="813" width="1850" height="1" fill="#d4d4d4"/>
<rect x="0" y="813" width="47" height="1" fill="#b4b4b4"/>
<rect x="48" y="847" width="1850" height="1" fill="#d4d4d4"/>
<rect x="0" y="847" width="47" height="1" fill="#b4b4b4"/>
<rect x="48" y="881" width="1850" height="1" fill="#d4d4d4"/>
<rect x="0" y="881" width="47" height="1" fill="#b4b4b4"/>
<rect x="48" y="915" width="1850" height="1" fill="#d4d4d4"/>
<rect x="0" y="915" width="47" height="1" fill="#b4b4b4"/>
<rect x="48" y="949" width="1850" height="1" fill="#d4d4d4"/>
<rect x="0" y="949" width="47" height="1" fill="#b4b4b4"/>
<rect x="48" y="983" width="1850" height="1" fill="#d4d4d4"/>
<rect x="0" y="983" width="47" height="1" fill="#b4b4b4"/>
<rect x="265" y="337" width="110" height="35" fill="#ffff00"/>
<rect x="265" y="371" width="110" height="35" fill="#ffff00"/>
<rect x="265" y="405" width="110" height="35" fill="#ffff00"/>
<rect x="265" y="439" width="110" height="35" fill="#ffff00"/>
<rect x="265" y="473" width="110" height="35" fill="#ffff00"/>
<rect x="265" y="507" width="110" height="35" fill="#ffff00"/>
<rect x="265" y="541" width="110" height="35" fill="#ffff00"/>
<rect x="265" y="643" width="110" height="35" fill="#ffff00"/>
<rect x="265" y="711" width="110" height="35" fill="#ffff00"/>
<rect x="265" y="745" width="110" height="35" fill="#ffff00"/>
<rect x="265" y="779" width="110" height="35" fill="#ffff00"/>
<rect x="265" y="813" width="110" height="35" fill="#ffff00"/>
<rect x="265" y="847" width="110" height="35" fill="#ffff00"/>
<rect x="265" y="881" width="110" height="35" fill="#ffff00"/>
<rect x="483" y="303" width="110" height="35" fill="#ffff00"/>
<rect x="483" y="337" width="110" height="35" fill="#ffff00"/>
<rect x="483" y="405" width="110" height="35" fill="#ffff00"/>
<rect x="483" y="439" width="110" height="35" fill="#ffff00"/>
<rect x="483" y="473" width="110" height="35" fill="#ffff00"/>
<rect x="483" y="507" width="110" height="35" fill="#ffff00"/>
<rect x="483" y="541" width="110" height="35" fill="#ffff00"/>
<rect x="483" y="643" width="110" height="35" fill="#ffff00"/>
<rect x="483" y="677" width="110" height="35" fill="#ffff00"/>
<rect x="483" y="711" width="110" height="35" fill="#ffff00"/>
<rect x="483" y="779" width="110" height="35" fill="#ffff00"/>
<rect x="483" y="813" width="110" height="35" fill="#ffff00"/>
<rect x="483" y="847" width="110" height="35" fill="#ffff00"/>
<rect x="483" y="881" width="110" height="35" fill="#ffff00"/>
<rect x="701" y="303" width="110" height="35" fill="#ffff00"/>
<rect x="701" y="337" width="110" height="35" fill="#ffff00"/>
<rect x="701" y="371" width="110" height="35" fill="#ffff00"/>
<rect x="701" y="405" width="110" height="35" fill="#ffff00"/>
<rect x="701" y="473" width="110" height="35" fill="#ffff00"/>
<rect x="701" y="507" width="110" height="35" fill="#ffff00"/>
<rect x="701" y="541" width="110" height="35" fill="#ffff00"/>
<rect x="701" y="643" width="110" height="35" fill="#ffff00"/>
<rect x="701" y="677" width="110" height="35" fill="#ffff00"/>
<rect x="701" y="711" width="110" height="35" fill="#ffff00"/>
<rect x="701" y="745" width="110" height="35" fill="#ffff00"/>
<rect x="701" y="779" width="110" height="35" fill="#ffff00"/>
<rect x="701" y="847" width="110" height="35" fill="#ffff00"/>
<rect x="701" y="881" width="110" height="35" fill="#ffff00"/>
<rect x="919" y="303" width="110" height="35" fill="#ffff00"/>
<rect x="919" y="337" width="110" height="35" fill="#ffff00"/>
<rect x="919" y="371" width="110" height="35" fill="#ffff00"/>
<rect x="919" y="405" width="110" height="35" fill="#ffff00"/>
<rect x="919" y="439" width="110" height="35" fill="#ffff00"/>
<rect x="919" y="473" width="110" height="35" fill="#ffff00"/>
<rect x="919" y="541" width="110" height="35" fill="#ffff00"/>
<rect x="919" y="643" width="110" height="35" fill="#ffff00"/>
<rect x="919" y="677" width="110" height="35" fill="#ffff00"/>
<rect x="919" y="711" width="110" height="35" fill="#ffff00"/>
<rect x="919" y="745" width="110" height="35" fill="#ffff00"/>
<rect x="919" y="779" width="110" height="35" fill="#ffff00"/>
<rect x="919" y="813" width="110" height="35" fill="#ffff00"/>
<rect x="919" y="847" width="110" height="35" fill="#ffff00"/>
<rect x="0" y="235" width="1899" height="1" fill="#9e9e9e"/>
<rect x="47" y="203" width="1" height="787" fill="#9e9e9e"/>
<rect x="1898" y="235" width="1" height="755" fill="#a0a0a0"/>
<rect x="0" y="990" width="1899" height="1" fill="#a0a0a0"/>
<path d="M44 208 V232 H20 Z" fill="#b4b4b4"/>
<text x="102.0" y="228" font-size="23" fill="#000" text-anchor="middle">A</text>
<text x="211.0" y="228" font-size="23" fill="#000" text-anchor="middle">B</text>
<text x="320.0" y="228" font-size="23" fill="#217346" text-anchor="middle">C</text>
<text x="429.0" y="228" font-size="23" fill="#000" text-anchor="middle">D</text>
<text x="538.0" y="228" font-size="23" fill="#000" text-anchor="middle">E</text>
<text x="647.0" y="228" font-size="23" fill="#000" text-anchor="middle">F</text>
<text x="756.0" y="228" font-size="23" fill="#000" text-anchor="middle">G</text>
<text x="865.0" y="228" font-size="23" fill="#000" text-anchor="middle">H</text>
<text x="974.0" y="228" font-size="23" fill="#000" text-anchor="middle">I</text>
<text x="1083.0" y="228" font-size="23" fill="#000" text-anchor="middle">J</text>
<text x="1192.0" y="228" font-size="23" fill="#000" text-anchor="middle">K</text>
<text x="1301.0" y="228" font-size="23" fill="#000" text-anchor="middle">L</text>
<text x="1410.0" y="228" font-size="23" fill="#000" text-anchor="middle">M</text>
<text x="1519.0" y="228" font-size="23" fill="#000" text-anchor="middle">N</text>
<text x="1628.0" y="228" font-size="23" fill="#000" text-anchor="middle">O</text>
<text x="1737.0" y="228" font-size="23" fill="#000" text-anchor="middle">P</text>
<text x="1846.0" y="228" font-size="23" fill="#000" text-anchor="middle">Q</text>
<text x="23.5" y="261" font-size="23" fill="#000" text-anchor="middle">1</text>
<text x="23.5" y="295" font-size="23" fill="#000" text-anchor="middle">2</text>
<text x="23.5" y="329" font-size="23" fill="#000" text-anchor="middle">3</text>
<text x="23.5" y="363" font-size="23" fill="#217346" text-anchor="middle">4</text>
<text x="23.5" y="397" font-size="23" fill="#000" text-anchor="middle">5</text>
<text x="23.5" y="431" font-size="23" fill="#000" text-anchor="middle">6</text>
<text x="23.5" y="465" font-size="23" fill="#000" text-anchor="middle">7</text>
<text x="23.5" y="499" font-size="23" fill="#000" text-anchor="middle">8</text>
<text x="23.5" y="533" font-size="23" fill="#000" text-anchor="middle">9</text>
<text x="23.5" y="567" font-size="23" fill="#000" text-anchor="middle">10</text>
<text x="23.5" y="601" font-size="23" fill="#000" text-anchor="middle">11</text>
<text x="23.5" y="635" font-size="23" fill="#000" text-anchor="middle">12</text>
<text x="23.5" y="669" font-size="23" fill="#000" text-anchor="middle">13</text>
<text x="23.5" y="703" font-size="23" fill="#000" text-anchor="middle">14</text>
<text x="23.5" y="737" font-size="23" fill="#000" text-anchor="middle">15</text>
<text x="23.5" y="771" font-size="23" fill="#000" text-anchor="middle">16</text>
<text x="23.5" y="805" font-size="23" fill="#000" text-anchor="middle">17</text>
<text x="23.5" y="839" font-size="23" fill="#000" text-anchor="middle">18</text>
<text x="23.5" y="873" font-size="23" fill="#000" text-anchor="middle">19</text>
<text x="23.5" y="907" font-size="23" fill="#000" text-anchor="middle">20</text>
<text x="23.5" y="941" font-size="23" fill="#000" text-anchor="middle">21</text>
<text x="23.5" y="975" font-size="23" fill="#000" text-anchor="middle">22</text>
<text x="101.10" y="261" font-size="23" fill="#000" font-weight="normal" font-style="normal" textLength="50.27" lengthAdjust="spacingAndGlyphs">1000</text>
<text x="101.10" y="295" font-size="23" fill="#000" font-weight="normal" font-style="normal" textLength="50.27" lengthAdjust="spacingAndGlyphs">1001</text>
<text x="101.10" y="329" font-size="23" fill="#000" font-weight="normal" font-style="normal" textLength="50.27" lengthAdjust="spacingAndGlyphs">1002</text>
<text x="101.10" y="363" font-size="23" fill="#000" font-weight="normal" font-style="normal" textLength="50.27" lengthAdjust="spacingAndGlyphs">1003</text>
<text x="101.10" y="397" font-size="23" fill="#000" font-weight="normal" font-style="normal" textLength="50.27" lengthAdjust="spacingAndGlyphs">1004</text>
<text x="101.10" y="431" font-size="23" fill="#000" font-weight="normal" font-style="normal" textLength="50.27" lengthAdjust="spacingAndGlyphs">1005</text>
<text x="101.10" y="465" font-size="23" fill="#000" font-weight="normal" font-style="normal" textLength="50.27" lengthAdjust="spacingAndGlyphs">1006</text>
<text x="101.10" y="499" font-size="23" fill="#000" font-weight="normal" font-style="normal" textLength="50.27" lengthAdjust="spacingAndGlyphs">1007</text>
<text x="101.10" y="533" font-size="23" fill="#000" font-weight="normal" font-style="normal" textLength="50.27" lengthAdjust="spacingAndGlyphs">1008</text>
<text x="101.10" y="567" font-size="23" fill="#000" font-weight="normal" font-style="normal" textLength="50.27" lengthAdjust="spacingAndGlyphs">1009</text>
<text x="101.10" y="601" font-size="23" fill="#000" font-weight="normal" font-style="normal" textLength="50.27" lengthAdjust="spacingAndGlyphs">1010</text>
<text x="101.10" y="635" font-size="23" fill="#000" font-weight="normal" font-style="normal" textLength="50.26" lengthAdjust="spacingAndGlyphs">1011</text>
<text x="101.10" y="669" font-size="23" fill="#000" font-weight="normal" font-style="normal" textLength="50.27" lengthAdjust="spacingAndGlyphs">1012</text>
<text x="101.10" y="703" font-size="23" fill="#000" font-weight="normal" font-style="normal" textLength="50.27" lengthAdjust="spacingAndGlyphs">1013</text>
<text x="101.10" y="737" font-size="23" fill="#000" font-weight="normal" font-style="normal" textLength="50.27" lengthAdjust="spacingAndGlyphs">1014</text>
<text x="101.10" y="771" font-size="23" fill="#000" font-weight="normal" font-style="normal" textLength="50.27" lengthAdjust="spacingAndGlyphs">1015</text>
<text x="101.10" y="805" font-size="23" fill="#000" font-weight="normal" font-style="normal" textLength="50.27" lengthAdjust="spacingAndGlyphs">1016</text>
<text x="101.10" y="839" font-size="23" fill="#000" font-weight="normal" font-style="normal" textLength="50.27" lengthAdjust="spacingAndGlyphs">1017</text>
<text x="101.10" y="873" font-size="23" fill="#000" font-weight="normal" font-style="normal" textLength="50.27" lengthAdjust="spacingAndGlyphs">1018</text>
<text x="101.10" y="907" font-size="23" fill="#000" font-weight="normal" font-style="normal" textLength="50.27" lengthAdjust="spacingAndGlyphs">1019</text>
<text x="101.10" y="941" font-size="23" fill="#000" font-weight="normal" font-style="normal" textLength="50.27" lengthAdjust="spacingAndGlyphs">1020</text>
<text x="319.10" y="295" font-size="23" fill="#000" font-weight="normal" font-style="normal" textLength="50.27" lengthAdjust="spacingAndGlyphs">1021</text>
<text x="319.10" y="329" font-size="23" fill="#000" font-weight="normal" font-style="normal" textLength="50.27" lengthAdjust="spacingAndGlyphs">1022</text>
<text x="319.10" y="363" font-size="23" fill="#000" font-weight="normal" font-style="normal" textLength="50.27" lengthAdjust="spacingAndGlyphs">1023</text>
<text x="319.10" y="397" font-size="23" fill="#000" font-weight="normal" font-style="normal" textLength="50.27" lengthAdjust="spacingAndGlyphs">1024</text>
<text x="319.10" y="431" font-size="23" fill="#000" font-weight="normal" font-style="normal" textLength="50.27" lengthAdjust="spacingAndGlyphs">1025</text>
<text x="319.10" y="465" font-size="23" fill="#000" font-weight="normal" font-style="normal" textLength="50.27" lengthAdjust="spacingAndGlyphs">1026</text>
<text x="319.10" y="499" font-size="23" fill="#000" font-weight="normal" font-style="normal" textLength="50.27" lengthAdjust="spacingAndGlyphs">1027</text>
<text x="319.10" y="533" font-size="23" fill="#000" font-weight="normal" font-style="normal" textLength="50.27" lengthAdjust="spacingAndGlyphs">1028</text>
<text x="319.10" y="567" font-size="23" fill="#000" font-weight="normal" font-style="normal" textLength="50.27" lengthAdjust="spacingAndGlyphs">1029</text>
<text x="319.10" y="601" font-size="23" fill="#000" font-weight="normal" font-style="normal" textLength="50.27" lengthAdjust="spacingAndGlyphs">1030</text>
<text x="319.10" y="635" font-size="23" fill="#000" font-weight="normal" font-style="normal" textLength="50.27" lengthAdjust="spacingAndGlyphs">1031</text>
<text x="319.10" y="669" font-size="23" fill="#000" font-weight="normal" font-style="normal" textLength="50.27" lengthAdjust="spacingAndGlyphs">1032</text>
<text x="319.10" y="703" font-size="23" fill="#000" font-weight="normal" font-style="normal" textLength="50.27" lengthAdjust="spacingAndGlyphs">1033</text>
<text x="319.10" y="737" font-size="23" fill="#000" font-weight="normal" font-style="normal" textLength="50.27" lengthAdjust="spacingAndGlyphs">1034</text>
<text x="319.10" y="771" font-size="23" fill="#000" font-weight="normal" font-style="normal" textLength="50.27" lengthAdjust="spacingAndGlyphs">1035</text>
<text x="319.10" y="805" font-size="23" fill="#000" font-weight="normal" font-style="normal" textLength="50.27" lengthAdjust="spacingAndGlyphs">1036</text>
<text x="319.10" y="839" font-size="23" fill="#000" font-weight="normal" font-style="normal" textLength="50.27" lengthAdjust="spacingAndGlyphs">1037</text>
<text x="319.10" y="873" font-size="23" fill="#000" font-weight="normal" font-style="normal" textLength="50.27" lengthAdjust="spacingAndGlyphs">1038</text>
<text x="319.10" y="907" font-size="23" fill="#000" font-weight="normal" font-style="normal" textLength="50.27" lengthAdjust="spacingAndGlyphs">1039</text>
<text x="319.10" y="941" font-size="23" fill="#000" font-weight="normal" font-style="normal" textLength="50.27" lengthAdjust="spacingAndGlyphs">1040</text>
<text x="537.10" y="295" font-size="23" fill="#000" font-weight="normal" font-style="normal" textLength="50.27" lengthAdjust="spacingAndGlyphs">1041</text>
<text x="537.10" y="329" font-size="23" fill="#000" font-weight="normal" font-style="normal" textLength="50.27" lengthAdjust="spacingAndGlyphs">1042</text>
<text x="537.10" y="363" font-size="23" fill="#000" font-weight="normal" font-style="normal" textLength="50.27" lengthAdjust="spacingAndGlyphs">1043</text>
<text x="537.10" y="397" font-size="23" fill="#000" font-weight="normal" font-style="normal" textLength="50.27" lengthAdjust="spacingAndGlyphs">1044</text>
<text x="537.10" y="431" font-size="23" fill="#000" font-weight="normal" font-style="normal" textLength="50.27" lengthAdjust="spacingAndGlyphs">1045</text>
<text x="537.10" y="465" font-size="23" fill="#000" font-weight="normal" font-style="normal" textLength="50.27" lengthAdjust="spacingAndGlyphs">1046</text>
<text x="537.10" y="499" font-size="23" fill="#000" font-weight="normal" font-style="normal" textLength="50.27" lengthAdjust="spacingAndGlyphs">1047</text>
<text x="537.10" y="533" font-size="23" fill="#000" font-weight="normal" font-style="normal" textLength="50.27" lengthAdjust="spacingAndGlyphs">1048</text>
<text x="537.10" y="567" font-size="23" fill="#000" font-weight="normal" font-style="normal" textLength="50.27" lengthAdjust="spacingAndGlyphs">1049</text>
<text x="537.10" y="601" font-size="23" fill="#000" font-weight="normal" font-style="normal" textLength="50.27" lengthAdjust="spacingAndGlyphs">1050</text>
<text x="537.10" y="635" font-size="23" fill="#000" font-weight="normal" font-style="normal" textLength="50.27" lengthAdjust="spacingAndGlyphs">1051</text>
<text x="537.10" y="669" font-size="23" fill="#000" font-weight="normal" font-style="normal" textLength="50.27" lengthAdjust="spacingAndGlyphs">1052</text>
<text x="537.10" y="703" font-size="23" fill="#000" font-weight="normal" font-style="normal" textLength="50.27" lengthAdjust="spacingAndGlyphs">1053</text>
<text x="537.10" y="737" font-size="23" fill="#000" font-weight="normal" font-style="normal" textLength="50.27" lengthAdjust="spacingAndGlyphs">1054</text>
<text x="537.10" y="771" font-size="23" fill="#000" font-weight="normal" font-style="normal" textLength="50.27" lengthAdjust="spacingAndGlyphs">1055</text>
<text x="537.10" y="805" font-size="23" fill="#000" font-weight="normal" font-style="normal" textLength="50.27" lengthAdjust="spacingAndGlyphs">1056</text>
<text x="537.10" y="839" font-size="23" fill="#000" font-weight="normal" font-style="normal" textLength="50.27" lengthAdjust="spacingAndGlyphs">1057</text>
<text x="537.10" y="873" font-size="23" fill="#000" font-weight="normal" font-style="normal" textLength="50.27" lengthAdjust="spacingAndGlyphs">1058</text>
<text x="537.10" y="907" font-size="23" fill="#000" font-weight="normal" font-style="normal" textLength="50.27" lengthAdjust="spacingAndGlyphs">1059</text>
<text x="537.10" y="941" font-size="23" fill="#000" font-weight="normal" font-style="normal" textLength="50.27" lengthAdjust="spacingAndGlyphs">1060</text>
<text x="755.10" y="295" font-size="23" fill="#000" font-weight="normal" font-style="normal" textLength="50.27" lengthAdjust="spacingAndGlyphs">1061</text>
<text x="755.10" y="329" font-size="23" fill="#000" font-weight="normal" font-style="normal" textLength="50.27" lengthAdjust="spacingAndGlyphs">1062</text>
<text x="755.10" y="363" font-size="23" fill="#000" font-weight="normal" font-style="normal" textLength="50.27" lengthAdjust="spacingAndGlyphs">1063</text>
<text x="755.10" y="397" font-size="23" fill="#000" font-weight="normal" font-style="normal" textLength="50.27" lengthAdjust="spacingAndGlyphs">1064</text>
<text x="755.10" y="431" font-size="23" fill="#000" font-weight="normal" font-style="normal" textLength="50.27" lengthAdjust="spacingAndGlyphs">1065</text>
<text x="755.10" y="465" font-size="23" fill="#000" font-weight="normal" font-style="normal" textLength="50.27" lengthAdjust="spacingAndGlyphs">1066</text>
<text x="755.10" y="499" font-size="23" fill="#000" font-weight="normal" font-style="normal" textLength="50.27" lengthAdjust="spacingAndGlyphs">1067</text>
<text x="755.10" y="533" font-size="23" fill="#000" font-weight="normal" font-style="normal" textLength="50.27" lengthAdjust="spacingAndGlyphs">1068</text>
<text x="755.10" y="567" font-size="23" fill="#000" font-weight="normal" font-style="normal" textLength="50.27" lengthAdjust="spacingAndGlyphs">1069</text>
<text x="755.10" y="601" font-size="23" fill="#000" font-weight="normal" font-style="normal" textLength="50.27" lengthAdjust="spacingAndGlyphs">1070</text>
<text x="755.10" y="635" font-size="23" fill="#000" font-weight="normal" font-style="normal" textLength="50.27" lengthAdjust="spacingAndGlyphs">1071</text>
<text x="755.10" y="669" font-size="23" fill="#000" font-weight="normal" font-style="normal" textLength="50.27" lengthAdjust="spacingAndGlyphs">1072</text>
<text x="755.10" y="703" font-size="23" fill="#000" font-weight="normal" font-style="normal" textLength="50.27" lengthAdjust="spacingAndGlyphs">1073</text>
<text x="755.10" y="737" font-size="23" fill="#000" font-weight="normal" font-style="normal" textLength="50.27" lengthAdjust="spacingAndGlyphs">1074</text>
<text x="755.10" y="771" font-size="23" fill="#000" font-weight="normal" font-style="normal" textLength="50.27" lengthAdjust="spacingAndGlyphs">1075</text>
<text x="755.10" y="805" font-size="23" fill="#000" font-weight="normal" font-style="normal" textLength="50.27" lengthAdjust="spacingAndGlyphs">1076</text>
<text x="755.10" y="839" font-size="23" fill="#000" font-weight="normal" font-style="normal" textLength="50.27" lengthAdjust="spacingAndGlyphs">1077</text>
<text x="755.10" y="873" font-size="23" fill="#000" font-weight="normal" font-style="normal" textLength="50.27" lengthAdjust="spacingAndGlyphs">1078</text>
<text x="755.10" y="907" font-size="23" fill="#000" font-weight="normal" font-style="normal" textLength="50.27" lengthAdjust="spacingAndGlyphs">1079</text>
<text x="755.10" y="941" font-size="23" fill="#000" font-weight="normal" font-style="normal" textLength="50.27" lengthAdjust="spacingAndGlyphs">1080</text>
<text x="973.10" y="295" font-size="23" fill="#000" font-weight="normal" font-style="normal" textLength="50.27" lengthAdjust="spacingAndGlyphs">1081</text>
<text x="973.10" y="329" font-size="23" fill="#000" font-weight="normal" font-style="normal" textLength="50.27" lengthAdjust="spacingAndGlyphs">1082</text>
<text x="973.10" y="363" font-size="23" fill="#000" font-weight="normal" font-style="normal" textLength="50.27" lengthAdjust="spacingAndGlyphs">1083</text>
<text x="973.10" y="397" font-size="23" fill="#000" font-weight="normal" font-style="normal" textLength="50.27" lengthAdjust="spacingAndGlyphs">1084</text>
<text x="973.10" y="431" font-size="23" fill="#000" font-weight="normal" font-style="normal" textLength="50.27" lengthAdjust="spacingAndGlyphs">1085</text>
<text x="973.10" y="465" font-size="23" fill="#000" font-weight="normal" font-style="normal" textLength="50.27" lengthAdjust="spacingAndGlyphs">1086</text>
<text x="973.10" y="499" font-size="23" fill="#000" font-weight="normal" font-style="normal" textLength="50.27" lengthAdjust="spacingAndGlyphs">1087</text>
<text x="973.10" y="533" font-size="23" fill="#000" font-weight="normal" font-style="normal" textLength="50.27" lengthAdjust="spacingAndGlyphs">1088</text>
<text x="973.10" y="567" font-size="23" fill="#000" font-weight="normal" font-style="normal" textLength="50.27" lengthAdjust="spacingAndGlyphs">1089</text>
<text x="973.10" y="601" font-size="23" fill="#000" font-weight="normal" font-style="normal" textLength="50.27" lengthAdjust="spacingAndGlyphs">1090</text>
<text x="973.10" y="635" font-size="23" fill="#000" font-weight="normal" font-style="normal" textLength="50.27" lengthAdjust="spacingAndGlyphs">1091</text>
<text x="973.10" y="669" font-size="23" fill="#000" font-weight="normal" font-style="normal" textLength="50.27" lengthAdjust="spacingAndGlyphs">1092</text>
<text x="973.10" y="703" font-size="23" fill="#000" font-weight="normal" font-style="normal" textLength="50.27" lengthAdjust="spacingAndGlyphs">1093</text>
<text x="973.10" y="737" font-size="23" fill="#000" font-weight="normal" font-style="normal" textLength="50.27" lengthAdjust="spacingAndGlyphs">1094</text>
<text x="973.10" y="771" font-size="23" fill="#000" font-weight="normal" font-style="normal" textLength="50.27" lengthAdjust="spacingAndGlyphs">1095</text>
<text x="973.10" y="805" font-size="23" fill="#000" font-weight="normal" font-style="normal" textLength="50.27" lengthAdjust="spacingAndGlyphs">1096</text>
<text x="973.10" y="839" font-size="23" fill="#000" font-weight="normal" font-style="normal" textLength="50.27" lengthAdjust="spacingAndGlyphs">1097</text>
<text x="973.10" y="873" font-size="23" fill="#000" font-weight="normal" font-style="normal" textLength="50.27" lengthAdjust="spacingAndGlyphs">1098</text>
<text x="973.10" y="907" font-size="23" fill="#000" font-weight="normal" font-style="normal" textLength="50.27" lengthAdjust="spacingAndGlyphs">1099</text>
<text x="973.10" y="941" font-size="23" fill="#000" font-weight="normal" font-style="normal" textLength="50.26" lengthAdjust="spacingAndGlyphs">1100</text>
<text x="1191.10" y="295" font-size="23" fill="#000" font-weight="normal" font-style="normal" textLength="50.26" lengthAdjust="spacingAndGlyphs">1101</text>
<text x="1191.10" y="329" font-size="23" fill="#000" font-weight="normal" font-style="normal" textLength="50.26" lengthAdjust="spacingAndGlyphs">1102</text>
<text x="1191.10" y="363" font-size="23" fill="#000" font-weight="normal" font-style="normal" textLength="50.26" lengthAdjust="spacingAndGlyphs">1103</text>
<text x="1191.10" y="397" font-size="23" fill="#000" font-weight="normal" font-style="normal" textLength="50.26" lengthAdjust="spacingAndGlyphs">1104</text>
<text x="1191.10" y="431" font-size="23" fill="#000" font-weight="normal" font-style="normal" textLength="50.26" lengthAdjust="spacingAndGlyphs">1105</text>
<text x="1191.10" y="465" font-size="23" fill="#000" font-weight="normal" font-style="normal" textLength="50.26" lengthAdjust="spacingAndGlyphs">1106</text>
<text x="1191.10" y="499" font-size="23" fill="#000" font-weight="normal" font-style="normal" textLength="50.26" lengthAdjust="spacingAndGlyphs">1107</text>
<text x="1191.10" y="533" font-size="23" fill="#000" font-weight="normal" font-style="normal" textLength="50.26" lengthAdjust="spacingAndGlyphs">1108</text>
<text x="1191.10" y="567" font-size="23" fill="#000" font-weight="normal" font-style="normal" textLength="50.26" lengthAdjust="spacingAndGlyphs">1109</text>
<text x="1191.10" y="601" font-size="23" fill="#000" font-weight="normal" font-style="normal" textLength="50.25" lengthAdjust="spacingAndGlyphs">1110</text>
<text x="1191.10" y="635" font-size="23" fill="#000" font-weight="normal" font-style="normal" textLength="50.25" lengthAdjust="spacingAndGlyphs">1111</text>
<text x="1191.10" y="669" font-size="23" fill="#000" font-weight="normal" font-style="normal" textLength="50.25" lengthAdjust="spacingAndGlyphs">1112</text>
<text x="1191.10" y="703" font-size="23" fill="#000" font-weight="normal" font-style="normal" textLength="50.25" lengthAdjust="spacingAndGlyphs">1113</text>
<text x="1191.10" y="737" font-size="23" fill="#000" font-weight="normal" font-style="normal" textLength="50.25" lengthAdjust="spacingAndGlyphs">1114</text>
<text x="1191.10" y="771" font-size="23" fill="#000" font-weight="normal" font-style="normal" textLength="50.25" lengthAdjust="spacingAndGlyphs">1115</text>
<text x="1191.10" y="805" font-size="23" fill="#000" font-weight="normal" font-style="normal" textLength="50.25" lengthAdjust="spacingAndGlyphs">1116</text>
<text x="1191.10" y="839" font-size="23" fill="#000" font-weight="normal" font-style="normal" textLength="50.25" lengthAdjust="spacingAndGlyphs">1117</text>
<text x="1191.10" y="873" font-size="23" fill="#000" font-weight="normal" font-style="normal" textLength="50.25" lengthAdjust="spacingAndGlyphs">1118</text>
<text x="1191.10" y="907" font-size="23" fill="#000" font-weight="normal" font-style="normal" textLength="50.25" lengthAdjust="spacingAndGlyphs">1119</text>
<text x="1191.10" y="941" font-size="23" fill="#000" font-weight="normal" font-style="normal" textLength="50.26" lengthAdjust="spacingAndGlyphs">1120</text>
<text x="1409.10" y="295" font-size="23" fill="#000" font-weight="normal" font-style="normal" textLength="50.26" lengthAdjust="spacingAndGlyphs">1121</text>
<text x="1409.10" y="329" font-size="23" fill="#000" font-weight="normal" font-style="normal" textLength="50.26" lengthAdjust="spacingAndGlyphs">1122</text>
<text x="1409.10" y="363" font-size="23" fill="#000" font-weight="normal" font-style="normal" textLength="50.26" lengthAdjust="spacingAndGlyphs">1123</text>
<text x="1409.10" y="397" font-size="23" fill="#000" font-weight="normal" font-style="normal" textLength="50.26" lengthAdjust="spacingAndGlyphs">1124</text>
<text x="1409.10" y="431" font-size="23" fill="#000" font-weight="normal" font-style="normal" textLength="50.26" lengthAdjust="spacingAndGlyphs">1125</text>
<text x="1409.10" y="465" font-size="23" fill="#000" font-weight="normal" font-style="normal" textLength="50.26" lengthAdjust="spacingAndGlyphs">1126</text>
<text x="1409.10" y="499" font-size="23" fill="#000" font-weight="normal" font-style="normal" textLength="50.26" lengthAdjust="spacingAndGlyphs">1127</text>
<text x="1409.10" y="533" font-size="23" fill="#000" font-weight="normal" font-style="normal" textLength="50.26" lengthAdjust="spacingAndGlyphs">1128</text>
<text x="1409.10" y="567" font-size="23" fill="#000" font-weight="normal" font-style="normal" textLength="50.26" lengthAdjust="spacingAndGlyphs">1129</text>
<text x="1409.10" y="601" font-size="23" fill="#000" font-weight="normal" font-style="normal" textLength="50.26" lengthAdjust="spacingAndGlyphs">1130</text>
<text x="1409.10" y="635" font-size="23" fill="#000" font-weight="normal" font-style="normal" textLength="50.26" lengthAdjust="spacingAndGlyphs">1131</text>
<text x="1409.10" y="669" font-size="23" fill="#000" font-weight="normal" font-style="normal" textLength="50.26" lengthAdjust="spacingAndGlyphs">1132</text>
<text x="1409.10" y="703" font-size="23" fill="#000" font-weight="normal" font-style="normal" textLength="50.26" lengthAdjust="spacingAndGlyphs">1133</text>
<text x="1409.10" y="737" font-size="23" fill="#000" font-weight="normal" font-style="normal" textLength="50.26" lengthAdjust="spacingAndGlyphs">1134</text>
<text x="1409.10" y="771" font-size="23" fill="#000" font-weight="normal" font-style="normal" textLength="50.26" lengthAdjust="spacingAndGlyphs">1135</text>
<text x="1409.10" y="805" font-size="23" fill="#000" font-weight="normal" font-style="normal" textLength="50.26" lengthAdjust="spacingAndGlyphs">1136</text>
<text x="1409.10" y="839" font-size="23" fill="#000" font-weight="normal" font-style="normal" textLength="50.26" lengthAdjust="spacingAndGlyphs">1137</text>
<text x="1409.10" y="873" font-size="23" fill="#000" font-weight="normal" font-style="normal" textLength="50.26" lengthAdjust="spacingAndGlyphs">1138</text>
<text x="1409.10" y="907" font-size="23" fill="#000" font-weight="normal" font-style="normal" textLength="50.26" lengthAdjust="spacingAndGlyphs">1139</text>
<text x="1409.10" y="941" font-size="23" fill="#000" font-weight="normal" font-style="normal" textLength="50.26" lengthAdjust="spacingAndGlyphs">1140</text>
<text x="1627.10" y="295" font-size="23" fill="#000" font-weight="normal" font-style="normal" textLength="50.26" lengthAdjust="spacingAndGlyphs">1141</text>
<text x="1627.10" y="329" font-size="23" fill="#000" font-weight="normal" font-style="normal" textLength="50.26" lengthAdjust="spacingAndGlyphs">1142</text>
<text x="1627.10" y="363" font-size="23" fill="#000" font-weight="normal" font-style="normal" textLength="50.26" lengthAdjust="spacingAndGlyphs">1143</text>
<text x="1627.10" y="397" font-size="23" fill="#000" font-weight="normal" font-style="normal" textLength="50.26" lengthAdjust="spacingAndGlyphs">1144</text>
<text x="1627.10" y="431" font-size="23" fill="#000" font-weight="normal" font-style="normal" textLength="50.26" lengthAdjust="spacingAndGlyphs">1145</text>
<text x="1627.10" y="465" font-size="23" fill="#000" font-weight="normal" font-style="normal" textLength="50.26" lengthAdjust="spacingAndGlyphs">1146</text>
<text x="1627.10" y="499" font-size="23" fill="#000" font-weight="normal" font-style="normal" textLength="50.26" lengthAdjust="spacingAndGlyphs">1147</text>
<text x="1627.10" y="533" font-size="23" fill="#000" font-weight="normal" font-style="normal" textLength="50.26" lengthAdjust="spacingAndGlyphs">1148</text>
<text x="1627.10" y="567" font-size="23" fill="#000" font-weight="normal" font-style="normal" textLength="50.26" lengthAdjust="spacingAndGlyphs">1149</text>
<text x="1627.10" y="601" font-size="23" fill="#000" font-weight="normal" font-style="normal" textLength="50.26" lengthAdjust="spacingAndGlyphs">1150</text>
<text x="1627.10" y="635" font-size="23" fill="#000" font-weight="normal" font-style="normal" textLength="50.26" lengthAdjust="spacingAndGlyphs">1151</text>
<text x="1627.10" y="669" font-size="23" fill="#000" font-weight="normal" font-style="normal" textLength="50.26" lengthAdjust="spacingAndGlyphs">1152</text>
<text x="1627.10" y="703" font-size="23" fill="#000" font-weight="normal" font-style="normal" textLength="50.26" lengthAdjust="spacingAndGlyphs">1153</text>
<text x="1627.10" y="737" font-size="23" fill="#000" font-weight="normal" font-style="normal" textLength="50.26" lengthAdjust="spacingAndGlyphs">1154</text>
<text x="1627.10" y="771" font-size="23" fill="#000" font-weight="normal" font-style="normal" textLength="50.26" lengthAdjust="spacingAndGlyphs">1155</text>
<text x="1627.10" y="805" font-size="23" fill="#000" font-weight="normal" font-style="normal" textLength="50.26" lengthAdjust="spacingAndGlyphs">1156</text>
<text x="1627.10" y="839" font-size="23" fill="#000" font-weight="normal" font-style="normal" textLength="50.26" lengthAdjust="spacingAndGlyphs">1157</text>
<text x="1627.10" y="873" font-size="23" fill="#000" font-weight="normal" font-style="normal" textLength="50.26" lengthAdjust="spacingAndGlyphs">1158</text>
<text x="1627.10" y="907" font-size="23" fill="#000" font-weight="normal" font-style="normal" textLength="50.26" lengthAdjust="spacingAndGlyphs">1159</text>
<text x="1627.10" y="941" font-size="23" fill="#000" font-weight="normal" font-style="normal" textLength="50.26" lengthAdjust="spacingAndGlyphs">1160</text>
<text x="1845.10" y="295" font-size="23" fill="#000" font-weight="normal" font-style="normal" textLength="50.26" lengthAdjust="spacingAndGlyphs">1161</text>
<text x="1845.10" y="329" font-size="23" fill="#000" font-weight="normal" font-style="normal" textLength="50.26" lengthAdjust="spacingAndGlyphs">1162</text>
<text x="1845.10" y="363" font-size="23" fill="#000" font-weight="normal" font-style="normal" textLength="50.26" lengthAdjust="spacingAndGlyphs">1163</text>
<text x="1845.10" y="397" font-size="23" fill="#000" font-weight="normal" font-style="normal" textLength="50.26" lengthAdjust="spacingAndGlyphs">1164</text>
<text x="1845.10" y="431" font-size="23" fill="#000" font-weight="normal" font-style="normal" textLength="50.26" lengthAdjust="spacingAndGlyphs">1165</text>
<text x="1845.10" y="465" font-size="23" fill="#000" font-weight="normal" font-style="normal" textLength="50.26" lengthAdjust="spacingAndGlyphs">1166</text>
<text x="1845.10" y="499" font-size="23" fill="#000" font-weight="normal" font-style="normal" textLength="50.26" lengthAdjust="spacingAndGlyphs">1167</text>
<text x="1845.10" y="533" font-size="23" fill="#000" font-weight="normal" font-style="normal" textLength="50.26" lengthAdjust="spacingAndGlyphs">1168</text>
<text x="1845.10" y="567" font-size="23" fill="#000" font-weight="normal" font-style="normal" textLength="50.26" lengthAdjust="spacingAndGlyphs">1169</text>
<text x="1845.10" y="601" font-size="23" fill="#000" font-weight="normal" font-style="normal" textLength="50.26" lengthAdjust="spacingAndGlyphs">1170</text>
<text x="1845.10" y="635" font-size="23" fill="#000" font-weight="normal" font-style="normal" textLength="50.26" lengthAdjust="spacingAndGlyphs">1171</text>
<text x="1845.10" y="669" font-size="23" fill="#000" font-weight="normal" font-style="normal" textLength="50.26" lengthAdjust="spacingAndGlyphs">1172</text>
<text x="1845.10" y="703" font-size="23" fill="#000" font-weight="normal" font-style="normal" textLength="50.26" lengthAdjust="spacingAndGlyphs">1173</text>
<text x="1845.10" y="737" font-size="23" fill="#000" font-weight="normal" font-style="normal" textLength="50.26" lengthAdjust="spacingAndGlyphs">1174</text>
<text x="1845.10" y="771" font-size="23" fill="#000" font-weight="normal" font-style="normal" textLength="50.26" lengthAdjust="spacingAndGlyphs">1175</text>
<text x="1845.10" y="805" font-size="23" fill="#000" font-weight="normal" font-style="normal" textLength="50.26" lengthAdjust="spacingAndGlyphs">1176</text>
<text x="1845.10" y="839" font-size="23" fill="#000" font-weight="normal" font-style="normal" textLength="50.26" lengthAdjust="spacingAndGlyphs">1177</text>
<text x="1845.10" y="873" font-size="23" fill="#000" font-weight="normal" font-style="normal" textLength="50.26" lengthAdjust="spacingAndGlyphs">1178</text>
<text x="1845.10" y="907" font-size="23" fill="#000" font-weight="normal" font-style="normal" textLength="50.26" lengthAdjust="spacingAndGlyphs">1179</text>
<text x="1845.10" y="941" font-size="23" fill="#000" font-weight="normal" font-style="normal" textLength="50.26" lengthAdjust="spacingAndGlyphs">1180</text>
<rect x="265" y="233" width="110" height="2" fill="#217346"/>
<rect x="46" y="337" width="2" height="35" fill="#217346"/>
<rect x="265" y="337" width="110" height="35" fill="none" stroke="#217346" stroke-width="2"/>
<rect x="371" y="368" width="6" height="1" fill="#fff"/>
<rect x="371" y="368" width="1" height="6" fill="#fff"/>
<rect x="372" y="369" width="5" height="5" fill="#217346"/>
<rect x="1902" y="205" width="15" height="785" fill="#dadada"/>
<rect x="1902.5" y="205.5" width="14" height="14" fill="#fff" stroke="#ababab" stroke-width="1"/>
<path d="M1906 214 L1909.5 210.5 L1913 214 Z" fill="#666"/>
<rect x="1902.5" y="220.5" width="14" height="16" fill="#fff" stroke="#ababab" stroke-width="1"/>
<rect x="1902.5" y="976.5" width="14" height="14" fill="#fff" stroke="#ababab" stroke-width="1"/>
<path d="M1906 982 L1909.5 985.5 L1913 982 Z" fill="#555"/>
<path d="M31 999.5 L27 1003.5 L31 1007.5 Z" fill="#b0b0b0"/>
<path d="M56 999.5 L60 1003.5 L56 1007.5 Z" fill="#b0b0b0"/>
<rect x="100" y="994" width="1" height="19" fill="#a0a0a0"/>
<text x="113.00" y="1008" font-size="12.5" fill="#444" font-weight="normal" font-style="normal" textLength="38.02" lengthAdjust="spacingAndGlyphs">Sheet1</text>
<rect x="165" y="990" width="65" height="25" fill="#fff"/>
<rect x="165" y="990" width="1" height="25" fill="#ababab"/>
<rect x="229" y="990" width="1" height="25" fill="#ababab"/>
<rect x="165" y="1013" width="65" height="2" fill="#217346"/>
<text x="177.00" y="1008" font-size="12.5" fill="#217346" font-weight="bold" font-style="normal" textLength="39.99" lengthAdjust="spacingAndGlyphs">Sheet2</text>
<circle cx="271" cy="1004" r="7.5" fill="none" stroke="#777" stroke-width="1"/>
<path d="M267 1004 H275 M271 1000 V1008" stroke="#777" stroke-width="1.5"/>
<rect x="1152" y="999" width="2" height="2" fill="#999"/>
<rect x="1152" y="1003" width="2" height="2" fill="#999"/>
<rect x="1152" y="1007" width="2" height="2" fill="#999"/>
<rect x="1169" y="997" width="715" height="15" fill="#dadada"/>
<rect x="1169.5" y="997.5" width="14" height="14" fill="#fff" stroke="#ababab" stroke-width="1"/>
<path d="M1179 1001 L1175.5 1004.5 L1179 1008 Z" fill="#555"/>
<rect x="1183.5" y="997.5" width="658" height="14" fill="#fff" stroke="#ababab" stroke-width="1"/>
<rect x="1884.5" y="997.5" width="14" height="14" fill="#fff" stroke="#ababab" stroke-width="1"/>
<path d="M1890 1001 L1893.5 1004.5 L1890 1008 Z" fill="#555"/>
<rect x="0" y="1018" width="1920" height="1" fill="#d5d5d5"/>
<path d="M9.5 1028 V1034.5 H20.5 V1025" fill="none" stroke="#555" stroke-width="1.1"/>
<rect x="15.3" y="1023" width="5.7" height="2.6" fill="#555"/>
<circle cx="11" cy="1025" r="3" fill="#555"/>
<rect x="11" y="1028.6" width="2.2" height="1.6" fill="#555"/>
<rect x="11" y="1031.8" width="2.2" height="1.4" fill="#555"/>
<rect x="14.5" y="1028.6" width="2.2" height="1.6" fill="#555"/>
<rect x="14.5" y="1031.8" width="2.2" height="1.4" fill="#555"/>
<rect x="18" y="1028.6" width="2.2" height="1.6" fill="#555"/>
<rect x="18" y="1031.8" width="2.2" height="1.4" fill="#555"/>
<rect x="1620" y="1019" width="40" height="21" fill="#c5c5c5"/>
<rect x="1633.5" y="1022.5" width="12" height="12" fill="#f0f0f0" stroke="#666" stroke-width="1"/>
<path d="M1637.5 1022.5 V1034.5 M1641.5 1022.5 V1034.5 M1633.5 1026.5 H1645.5 M1633.5 1030.5 H1645.5" stroke="#666" stroke-width="1"/>
<rect x="1673.5" y="1022.5" width="13" height="12" fill="none" stroke="#666" stroke-width="1"/>
<rect x="1675.5" y="1024.5" width="9" height="8" fill="none" stroke="#666" stroke-width="1"/>
<rect x="1677" y="1026.5" width="6" height="1" fill="#666"/>
<rect x="1677" y="1028.5" width="6" height="1" fill="#666"/>
<rect x="1677" y="1030.5" width="6" height="1" fill="#666"/>
<path d="M1713.5 1035 V1022.5 H1726.5 V1035 H1713.5 M1713.5 1030.5 H1720.5 V1022.5 M1717.5 1022.5 V1030.5" fill="none" stroke="#666" stroke-width="1"/>
<rect x="1746" y="1028" width="8" height="1.5" fill="#555"/>
<rect x="1759" y="1029" width="100" height="1" fill="#aaa"/>
<rect x="1809" y="1026" width="1" height="6" fill="#aaa"/>
<rect x="1818" y="1024" width="5" height="11" fill="#666"/>
<rect x="1864" y="1028.5" width="8" height="1.3" fill="#555"/>
<rect x="1867.3" y="1025" width="1.3" height="8" fill="#555"/>
<text x="1886.00" y="1033" font-size="11.5" fill="#444" font-weight="normal" font-style="normal" textLength="25.51" lengthAdjust="spacingAndGlyphs">170%</text>
<path d="M16 1053 L21 1052.3 V1059 H16 Z M22 1052.1 L32 1051 V1059 H22 Z M16 1060 H21 V1066.8 L16 1066.1 Z M22 1060 H32 V1068.2 L22 1067 Z" fill="#fff"/>
<path d="M64 1051.5 H72 L74 1053 H86 V1068 H64 Z" fill="#e8b730"/>
<rect x="64" y="1054" width="22" height="14" fill="#ffd35a"/>
<path d="M67.5 1068.5 V1061 H82 V1068.5 H78.5 V1064.5 H71 V1068.5 Z" fill="#3f8fdc"/>
<path d="M123.7 1059.7 L113.91 1054.05 A11.3 11.3 0 0 1 133.49 1054.05 Z" fill="#db4437"/>
<path d="M123.7 1059.7 L133.49 1054.05 A11.3 11.3 0 0 1 123.70 1071.00 Z" fill="#f4c20d"/>
<path d="M123.7 1059.7 L123.70 1071.00 A11.3 11.3 0 0 1 113.91 1054.05 Z" fill="#0f9d58"/>
<circle cx="123.7" cy="1059.7" r="5.2" fill="#fff"/>
<circle cx="123.7" cy="1059.7" r="4.1" fill="#4285f4"/>
<path d="M161 1051 L174 1048 V1071 L161 1068 Z" fill="#0072c6"/>
<rect x="172" y="1054" width="12" height="11" fill="#0072c6"/>
<path d="M174 1055 H183 V1064 H174 Z" fill="#fff"/>
<path d="M174 1055 L178.5 1059.5 L183 1055" fill="none" stroke="#0072c6" stroke-width="1.3"/>
<ellipse cx="167.2" cy="1059.7" rx="3" ry="3.8" fill="none" stroke="#fff" stroke-width="1.6"/>
<path d="M210.5 1049 H221.5 V1071 L216 1070 L210.5 1071 Z" fill="#f7f7f7"/>
<path d="M222.5 1049 H234 V1071 L228 1070 L222.5 1071 Z" fill="#f7f7f7"/>
<rect x="210" y="1049" width="1.5" height="22" fill="#bbb"/>
<rect x="232.5" y="1049" width="1.5" height="22" fill="#bbb"/>
<rect x="221.5" y="1049" width="1" height="22" fill="#888"/>
<text x="0" y="0" font-size="7.5" fill="#d0213a" font-weight="bold" transform="translate(218.5 1064) rotate(-90)" textLength="13" lengthAdjust="spacingAndGlyphs">Tally</text>
<text x="0" y="0" font-size="6.5" fill="#111" font-weight="bold" transform="translate(229.5 1067) rotate(-90)" textLength="9" lengthAdjust="spacingAndGlyphs">ERP</text>
<text x="0" y="0" font-size="6.5" fill="#d0213a" font-weight="bold" transform="translate(229.5 1054.5) rotate(-90)">9</text>
<rect x="211" y="1069" width="10" height="2" fill="#999"/>
<rect x="223" y="1069" width="10" height="2" fill="#999"/>
<path d="M261 1057.5 L276.5 1051 L283.5 1054.5 L268 1062 Z" fill="#cfcfcf"/>
<path d="M268 1062 L283.5 1054.5 L283 1057 L268.5 1064 Z" fill="#8f8f8f"/>
<path d="M261 1060 L268.5 1064.5 L281 1058 L281 1061 L268 1068 L260 1063 Z" fill="#d8d8d8"/>
<path d="M265 1061 L270 1059 L272 1066 L267 1068 Z" fill="#d64a3a"/>
<path d="M263.5 1063 L267 1062 L268 1068.5 L264.5 1068 Z" fill="#5d8fd0"/>
<rect x="296" y="1040" width="48" height="40" fill="#4b4b4b"/>
<rect x="314" y="1049" width="18" height="6" fill="#33c481"/>
<rect x="314" y="1055" width="18" height="5.5" fill="#21a366"/>
<rect x="314" y="1060.5" width="18" height="5.5" fill="#107c41"/>
<rect x="314" y="1066" width="18" height="5.5" fill="#185c37"/>
<rect x="308" y="1053" width="14.5" height="14.5" fill="#107c41" rx="0.8"/>
<text x="311.00" y="1064.5" font-size="10.5" fill="#fff" font-weight="bold" font-style="normal" textLength="7.50" lengthAdjust="spacingAndGlyphs">X</text>
<rect x="104" y="1078" width="40" height="2" fill="#76b9ed"/>
<rect x="202" y="1078" width="40" height="2" fill="#76b9ed"/>
<rect x="296" y="1078" width="48" height="2" fill="#76b9ed"/>
<path d="M1695 1063 L1701 1057 L1707 1063" fill="none" stroke="#fff" stroke-width="1.2"/>
<path d="M1721 1066 A11 11 0 0 1 1732 1055 M1724 1066 A8 8 0 0 1 1732 1058 M1727 1066 A5 5 0 0 1 1732 1061" fill="none" stroke="#fff" stroke-width="1.1"/>
<circle cx="1730.5" cy="1065" r="1.6" fill="#fff"/>
<path d="M1741.5 1058 H1744.5 L1748.5 1054.5 V1065.5 L1744.5 1062 H1741.5 Z" fill="none" stroke="#fff" stroke-width="1.1"/>
<path d="M1750.5 1057.5 L1755 1062 M1755 1057.5 L1750.5 1062" stroke="#fff" stroke-width="1.1"/>
<text x="1767.50" y="1063.5" font-size="11.5" fill="#fff" font-weight="normal" font-style="normal" textLength="22.52" lengthAdjust="spacingAndGlyphs">ENG</text>
<text x="1808.80" y="1055" font-size="11.5" fill="#fff" font-weight="normal" font-style="normal" textLength="46.82" lengthAdjust="spacingAndGlyphs">12:48 PM</text>
<text x="1803.10" y="1072.5" font-size="11.5" fill="#fff" font-weight="normal" font-style="normal" textLength="57.92" lengthAdjust="spacingAndGlyphs">31-10-2020</text>
<path d="M1879.5 1052.5 H1895.5 V1063.5 H1886 L1882 1067 V1063.5 H1879.5 Z" fill="#fff"/>
<rect x="1882" y="1055" width="11" height="1" fill="#1c1c1c"/>
<rect x="1882" y="1058" width="11" height="1" fill="#1c1c1c"/>
<rect x="1882" y="1061" width="11" height="1" fill="#1c1c1c"/>
<circle cx="1894.4" cy="1067.5" r="7.8" fill="#2b2b2b" stroke="#888" stroke-width="1"/>
<text x="1891.00" y="1071.5" font-size="10" fill="#fff" font-weight="bold" font-style="normal" textLength="6.95" lengthAdjust="spacingAndGlyphs">4</text>
<rect x="1915" y="1040" width="1" height="40" fill="#6a6a6a"/>
</svg></body></html>
